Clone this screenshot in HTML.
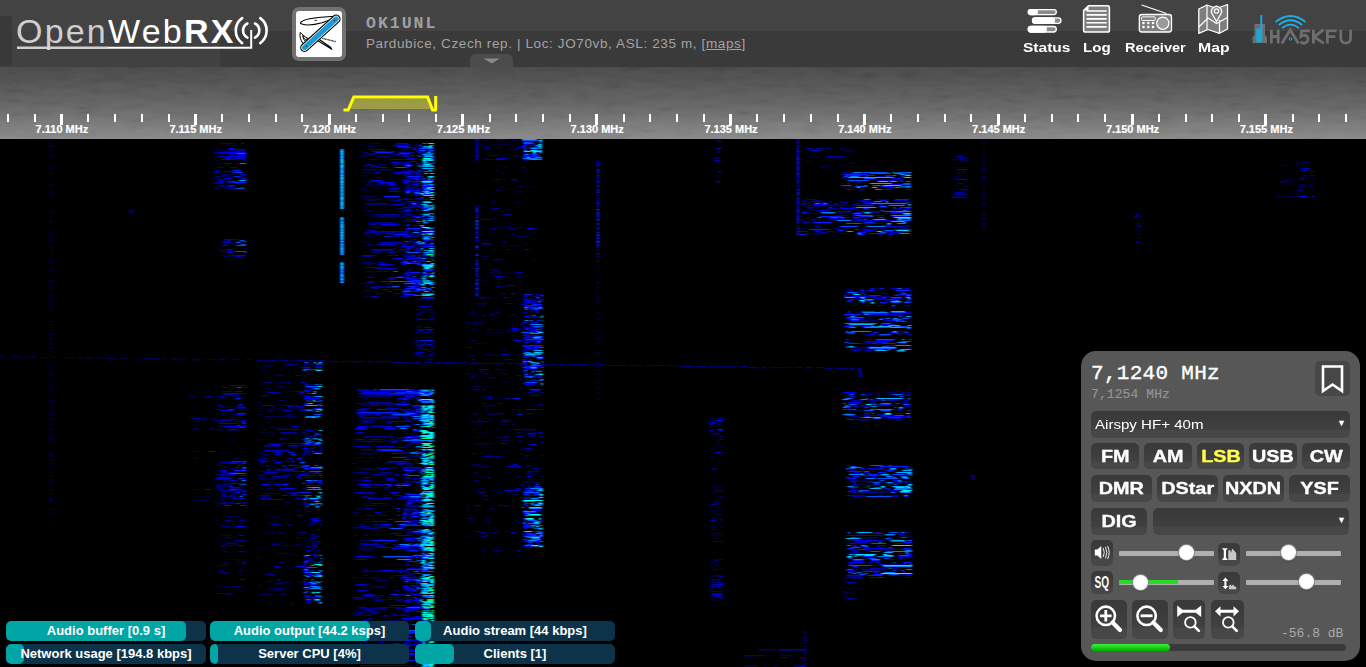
<!DOCTYPE html>
<html><head><meta charset="utf-8">
<style>
*{margin:0;padding:0;box-sizing:border-box}
html,body{width:1366px;height:667px;overflow:hidden;background:#000;font-family:"Liberation Sans",sans-serif}
.abs{position:absolute}
#hdr{position:absolute;left:0;top:0;width:1366px;height:67px;background:linear-gradient(#434343 0,#434343 31px,#3a3a3a 31px,#3a3a3a 67px)}
#spec{position:absolute;left:0;top:67px;width:1366px;height:72px;background:linear-gradient(#484848 0px,#4e4e4e 10px,#585858 23px,#626262 36px,#6c6c6c 46px,#787878 56px,#888 72px)}
#wf{position:absolute;left:0;top:139px;width:1366px;height:528px;background:#000}
.logo{position:absolute;left:16px;top:12px;font-size:34px;color:#fff;white-space:nowrap;letter-spacing:2.2px}
.logo .o{color:#cfcfcf}
.logo b{font-weight:bold}
.ttl{position:absolute;left:366px;top:13.5px;font-family:"Liberation Mono",monospace;font-weight:bold;font-size:16.5px;color:#a0a0a0;letter-spacing:2px}
.sub{position:absolute;left:366px;top:36px;font-size:13.5px;color:#a3a3a3;white-space:nowrap;letter-spacing:0.62px}
.sub u{text-decoration:underline}
.nav{position:absolute;top:40px;font-weight:bold;font-size:13.5px;color:#fff;white-space:nowrap;transform-origin:0 0}
.tick{position:absolute;top:114px;width:2px;height:8px;background:#fff}
.tick.maj{width:3px;height:11px}
.lbl{position:absolute;top:123px;font-weight:bold;font-size:11px;color:#fff;white-space:nowrap;transform:translateX(-50%);-webkit-text-stroke:0.2px #fff}
#panel{position:absolute;left:1081px;top:351px;width:279px;height:310px;background:#575757;border-radius:15px}
.btn{position:absolute;background:linear-gradient(#3a3a3a 0%,#3b3b3b 25%,#3e3e3e 50%,#414141 70%,#474747 72%,#474747 100%);border-radius:5px;color:#fff;font-weight:bold;font-size:17px;text-align:center;line-height:27px}
.btn span{display:inline-block;transform:scaleX(1.165);-webkit-text-stroke:0.35px currentColor}
.sbar{position:absolute;height:20px;border-radius:5px;background:#0c3349;overflow:hidden}
.sbar i{position:absolute;left:0;top:0;height:20px;background:#00a5a5;border-radius:5px}
.sbar span{position:absolute;left:0;right:0;top:0;text-align:center;line-height:20px;color:#fff;font-weight:bold;font-size:13px;white-space:nowrap}
.track{position:absolute;height:4.5px;background:#b0b0b0;border-radius:1px}
.thumb{position:absolute;width:15px;height:15px;border-radius:50%;background:#fff;box-shadow:0 0 0 1px #8a8a8a,0 1px 2px rgba(0,0,0,.4)}
</style></head><body>
<div id="hdr"></div>
<div class="abs" style="left:0;top:31px;width:220px;height:36px;background:#414141"></div>
<div class="abs" style="left:0;top:16px;width:12px;height:50px;background:#393939"></div>
<div id="spec"></div>
<svg class="abs" style="left:0;top:67px" width="1366" height="72"><defs><filter id="nz" x="0" y="0" width="100%" height="100%"><feTurbulence type="fractalNoise" baseFrequency="0.04 0.18" numOctaves="3" seed="4"/><feColorMatrix type="matrix" values="1.6 0 0 0 -0.3  1.6 0 0 0 -0.3  1.6 0 0 0 -0.3  0 0 0 0 0.045"/></filter></defs><rect width="1366" height="72" filter="url(#nz)"/></svg>
<div id="wf"></div>
<!--WF--><svg style="position:absolute;left:0;top:0" width="1366" height="667"><defs><filter id="bl" x="0" y="0" width="1366" height="667" filterUnits="userSpaceOnUse"><feGaussianBlur stdDeviation="1.0 0.45"/></filter></defs><g filter="url(#bl)" fill="none" stroke-width="1"><path stroke="#00002f" d="M220 145.5h1M217 149.5h10M217 150.5h10M222 150.5h9M232 151.5h4M213 154.5h2M214 159.5h4M214 160.5h4M214 188.5h9M223 245.5h4M219 250.5h4M221 252.5h2M231 257.5h1M216 398.5h13M216 399.5h13M220 399.5h2M221 407.5h15M221 414.5h4M223 415.5h1M233 415.5h10M230 418.5h6M216 422.5h10M216 430.5h8M218 433.5h1M218 461.5h7M220 464.5h2M222 468.5h2M226 474.5h3M223 481.5h5M223 485.5h9M219 485.5h7M217 488.5h6M230 489.5h10M216 490.5h11M222 492.5h2M229 491.5h1M221 495.5h4M221 496.5h4M220 499.5h2M216 503.5h4M222 453.5h3M222 454.5h3M234 459.5h5M222 507.5h7M234 507.5h6M217 519.5h1M215 520.5h4M225 521.5h7M238 524.5h2M238 525.5h2M226 525.5h1M243 529.5h1M219 540.5h7M224 541.5h13M224 542.5h13M244 541.5h2M238 552.5h8M226 552.5h4M220 559.5h9M231 559.5h15M221 561.5h1M219 571.5h3M217 587.5h3M243 586.5h3M217 591.5h1M217 592.5h1M240 592.5h2M226 595.5h6M244 594.5h1M212 419.5h3M197 420.5h5M197 421.5h5M210 429.5h3M195 458.5h4M192 480.5h2M192 481.5h2M201 480.5h2M201 481.5h2M211 480.5h4M190 496.5h4M199 496.5h9M191 500.5h4M369 144.5h2M395 145.5h1M363 153.5h4M369 155.5h6M376 157.5h17M406 157.5h1M366 162.5h3M377 165.5h2M362 170.5h30M370 173.5h21M362 176.5h4M389 176.5h3M370 180.5h2M378 182.5h2M366 182.5h8M376 185.5h10M370 186.5h31M373 188.5h2M373 189.5h2M403 191.5h3M363 198.5h4M379 198.5h15M379 199.5h15M367 200.5h5M389 200.5h4M409 205.5h1M381 212.5h1M399 212.5h11M366 216.5h10M378 217.5h29M369 223.5h15M364 233.5h40M366 235.5h3M367 236.5h8M390 237.5h10M361 241.5h8M361 242.5h8M367 245.5h5M362 246.5h1M401 247.5h4M366 248.5h2M364 251.5h3M380 252.5h2M371 253.5h10M364 269.5h1M365 276.5h8M397 277.5h11M365 290.5h5M376 294.5h6M385 293.5h1M388 297.5h2M404 145.5h5M405 147.5h2M403 151.5h2M406 151.5h1M407 163.5h4M405 165.5h2M404 167.5h3M414 175.5h7M405 184.5h4M410 185.5h3M404 188.5h17M404 189.5h17M408 198.5h4M408 199.5h4M403 206.5h2M404 210.5h1M407 210.5h5M403 210.5h6M405 211.5h6M405 212.5h6M413 215.5h2M404 216.5h3M404 217.5h3M407 224.5h1M405 229.5h3M405 230.5h3M402 234.5h12M403 257.5h2M404 263.5h4M404 264.5h4M406 281.5h1M405 298.5h3M417 298.5h2M417 299.5h2M426 298.5h1M426 299.5h1M414 299.5h4M427 300.5h4M417 310.5h4M424 310.5h10M419 316.5h2M415 319.5h5M414 320.5h6M429 320.5h5M429 321.5h5M417 326.5h4M428 326.5h1M415 333.5h4M414 341.5h4M415 343.5h2M423 343.5h1M421 345.5h4M418 347.5h4M431 348.5h3M416 351.5h9M415 355.5h5M421 355.5h8M421 356.5h8M428 356.5h6M428 357.5h6M416 359.5h3M422 359.5h3M426 360.5h8M364 399.5h4M365 402.5h9M388 402.5h1M362 402.5h5M362 403.5h5M366 404.5h33M371 408.5h2M363 414.5h5M358 415.5h16M359 417.5h5M382 417.5h16M365 419.5h4M358 425.5h4M358 426.5h4M398 426.5h5M357 427.5h27M364 437.5h30M366 439.5h3M355 440.5h21M394 441.5h4M359 447.5h3M360 450.5h20M355 453.5h2M359 454.5h18M357 461.5h3M357 462.5h3M389 468.5h9M364 469.5h8M380 473.5h12M372 475.5h14M375 475.5h16M361 478.5h6M361 479.5h6M358 484.5h21M363 493.5h7M371 493.5h6M366 496.5h6M383 498.5h9M362 503.5h8M357 509.5h5M374 511.5h16M353 513.5h6M409 514.5h1M355 515.5h11M355 519.5h7M353 525.5h4M353 526.5h4M360 526.5h4M374 525.5h9M402 526.5h3M378 527.5h12M352 528.5h14M357 533.5h28M361 540.5h3M359 544.5h10M380 545.5h4M364 546.5h2M357 546.5h13M374 547.5h12M362 548.5h12M365 548.5h1M365 549.5h1M360 550.5h16M361 555.5h12M387 555.5h15M358 568.5h1M372 571.5h4M374 575.5h13M361 578.5h1M369 578.5h11M372 585.5h17M372 586.5h17M372 598.5h9M362 609.5h24M354 610.5h7M365 611.5h9M384 611.5h3M355 615.5h6M368 619.5h4M382 626.5h3M362 630.5h5M382 629.5h7M382 630.5h7M358 632.5h21M361 635.5h1M361 636.5h1M355 637.5h12M402 638.5h5M355 639.5h9M360 640.5h17M360 641.5h17M363 648.5h47M383 658.5h5M402 658.5h4M408 658.5h2M404 393.5h2M406 394.5h6M403 395.5h12M406 408.5h7M402 410.5h4M405 410.5h3M403 414.5h3M409 415.5h12M404 416.5h2M404 419.5h5M405 421.5h7M408 435.5h1M408 436.5h1M411 436.5h4M404 442.5h2M403 453.5h4M407 453.5h2M409 457.5h12M407 465.5h3M403 470.5h16M406 472.5h15M404 482.5h17M404 483.5h6M405 487.5h16M404 502.5h6M405 504.5h13M403 509.5h8M403 519.5h9M402 528.5h1M410 528.5h4M406 530.5h10M406 532.5h1M408 532.5h2M403 538.5h16M402 543.5h2M403 574.5h3M411 577.5h4M407 592.5h4M405 594.5h7M405 598.5h1M407 598.5h2M411 619.5h1M404 634.5h10M417 634.5h2M404 643.5h4M402 661.5h2M411 666.5h2M415 666.5h6M393 395.5h6M495 140.5h12M484 141.5h3M500 140.5h8M500 141.5h8M491 144.5h20M491 145.5h20M478 146.5h1M518 147.5h5M486 147.5h3M509 148.5h3M487 153.5h4M505 155.5h2M508 155.5h1M514 156.5h5M502 157.5h3M483 159.5h3M499 166.5h2M499 167.5h2M496 172.5h1M516 172.5h1M501 172.5h4M501 173.5h4M503 180.5h2M501 187.5h2M518 187.5h3M495 189.5h15M511 190.5h2M481 191.5h5M515 192.5h3M531 192.5h2M492 202.5h4M492 203.5h4M513 202.5h1M517 203.5h3M481 206.5h4M505 208.5h5M505 209.5h5M503 215.5h9M521 214.5h2M521 215.5h2M481 219.5h1M494 219.5h2M481 226.5h2M496 226.5h2M501 227.5h2M508 229.5h4M489 232.5h2M531 232.5h2M480 234.5h1M525 237.5h3M483 239.5h6M483 240.5h6M525 244.5h2M490 245.5h1M500 245.5h6M512 245.5h9M512 246.5h9M500 249.5h1M483 260.5h3M493 260.5h10M489 270.5h8M494 271.5h5M497 272.5h7M498 274.5h3M486 276.5h2M524 275.5h6M498 283.5h1M534 283.5h1M502 294.5h3M476 304.5h11M496 306.5h1M515 307.5h6M474 310.5h3M479 310.5h4M495 310.5h1M495 311.5h1M468 314.5h8M481 314.5h3M481 315.5h3M490 315.5h5M512 315.5h2M483 316.5h3M476 318.5h3M497 318.5h1M471 329.5h5M471 330.5h5M493 329.5h7M507 331.5h4M483 332.5h10M497 332.5h11M475 343.5h12M483 354.5h2M486 355.5h6M519 355.5h2M470 356.5h6M483 364.5h5M494 363.5h5M480 371.5h1M497 370.5h9M480 372.5h4M483 374.5h7M504 374.5h3M473 375.5h1M473 376.5h1M470 377.5h4M521 376.5h1M492 378.5h4M471 380.5h2M495 379.5h3M475 383.5h2M485 386.5h4M485 387.5h4M508 386.5h3M471 390.5h8M483 390.5h3M487 399.5h6M484 406.5h12M485 410.5h3M504 409.5h1M511 410.5h3M493 414.5h11M502 420.5h9M470 421.5h2M467 421.5h1M479 425.5h2M502 424.5h6M497 430.5h3M506 429.5h5M506 430.5h5M466 433.5h1M481 432.5h5M491 432.5h2M491 433.5h2M517 433.5h2M472 433.5h1M477 433.5h5M478 436.5h2M475 437.5h6M520 441.5h2M477 444.5h14M487 447.5h3M487 448.5h3M488 450.5h3M472 454.5h4M480 460.5h2M485 467.5h5M482 477.5h3M517 477.5h4M503 478.5h2M477 485.5h2M478 488.5h6M478 489.5h6M493 490.5h6M478 493.5h7M508 493.5h3M510 495.5h2M484 500.5h5M518 506.5h2M475 509.5h6M481 537.5h6M515 536.5h4M535 300.5h1M523 302.5h5M524 316.5h6M525 330.5h2M531 330.5h1M525 330.5h4M524 335.5h6M541 335.5h2M524 352.5h5M524 361.5h6M524 374.5h3M535 374.5h1M530 393.5h5M525 395.5h4M531 406.5h4M522 430.5h14M523 432.5h5M533 433.5h4M539 437.5h4M532 452.5h1M524 456.5h3M524 457.5h3M533 456.5h3M526 466.5h6M536 472.5h4M530 474.5h3M529 476.5h2M530 479.5h2M523 482.5h10M528 487.5h4M524 487.5h2M523 492.5h2M524 494.5h3M263 365.5h10M263 366.5h10M292 365.5h3M260 367.5h3M260 368.5h3M263 370.5h4M282 370.5h1M265 374.5h3M281 375.5h2M301 376.5h2M265 385.5h3M265 386.5h3M278 388.5h1M278 389.5h1M259 391.5h7M276 391.5h1M287 391.5h6M266 393.5h2M261 396.5h7M303 402.5h2M303 403.5h2M257 408.5h2M261 409.5h1M271 408.5h10M282 408.5h3M282 409.5h3M296 409.5h7M259 411.5h1M265 417.5h5M260 427.5h2M272 427.5h3M279 428.5h2M275 428.5h14M275 429.5h14M293 429.5h3M259 432.5h16M259 453.5h4M260 457.5h5M270 457.5h22M259 459.5h9M292 461.5h2M259 464.5h2M260 474.5h7M259 476.5h5M260 477.5h2M263 478.5h1M281 477.5h20M266 482.5h7M278 483.5h1M285 482.5h6M285 483.5h6M267 489.5h5M262 492.5h2M271 509.5h10M299 510.5h2M267 516.5h3M271 516.5h8M271 517.5h8M299 517.5h2M262 518.5h1M274 518.5h12M266 522.5h7M266 523.5h7M271 531.5h4M271 532.5h4M266 533.5h2M279 533.5h5M299 533.5h6M271 542.5h13M270 544.5h1M297 545.5h3M285 546.5h3M291 545.5h4M291 546.5h4M258 548.5h10M282 548.5h5M282 549.5h5M290 554.5h3M303 556.5h1M281 557.5h5M260 566.5h2M260 567.5h2M271 576.5h2M304 582.5h1M265 583.5h1M265 584.5h1M276 584.5h6M299 583.5h6M276 586.5h2M268 589.5h18M288 588.5h4M287 594.5h3M303 364.5h7M309 365.5h2M303 367.5h2M303 434.5h1M303 435.5h1M304 444.5h3M305 447.5h2M305 453.5h7M305 454.5h7M307 472.5h2M305 482.5h7M306 510.5h1M309 510.5h4M304 560.5h2M307 559.5h2M316 513.5h2M307 522.5h1M314 522.5h2M305 531.5h4M309 535.5h6M315 537.5h4M306 539.5h5M306 540.5h5M309 540.5h6M309 541.5h6M318 540.5h1M315 543.5h1M312 549.5h3M315 549.5h6M315 550.5h6M313 551.5h1M826 149.5h5M840 149.5h5M844 151.5h10M808 156.5h15M826 158.5h17M851 161.5h3M851 162.5h3M821 167.5h5M827 166.5h5M837 166.5h14M906 174.5h2M847 179.5h5M873 179.5h8M856 183.5h3M829 199.5h2M842 199.5h4M876 200.5h13M893 201.5h4M902 201.5h4M804 201.5h6M804 202.5h6M897 202.5h4M811 202.5h3M833 205.5h1M839 204.5h6M814 206.5h26M840 206.5h2M844 206.5h7M864 207.5h9M827 209.5h11M802 210.5h13M846 210.5h2M890 211.5h6M808 212.5h6M853 217.5h2M812 218.5h8M819 220.5h16M819 221.5h16M849 222.5h2M849 223.5h2M811 223.5h1M805 225.5h24M815 227.5h6M800 228.5h28M843 229.5h6M901 229.5h7M800 230.5h1M822 230.5h7M835 232.5h7M835 233.5h7M812 234.5h9M879 292.5h6M869 293.5h3M845 295.5h3M903 306.5h8M858 313.5h3M870 315.5h1M870 334.5h4M846 334.5h3M844 341.5h7M854 341.5h9M865 392.5h18M885 393.5h12M907 393.5h3M857 395.5h3M843 401.5h2M869 401.5h10M852 404.5h10M857 406.5h3M854 411.5h8M853 418.5h3M901 470.5h7M851 471.5h5M847 475.5h4M859 477.5h3M859 478.5h3M883 483.5h3M851 484.5h16M850 485.5h8M874 489.5h3M874 490.5h3M877 534.5h6M900 536.5h12M846 537.5h2M857 538.5h20M857 539.5h5M882 551.5h10M849 556.5h2M849 568.5h27M895 568.5h1M854 568.5h11M893 569.5h8M899 570.5h4M873 570.5h20M843 578.5h5M843 579.5h5M851 578.5h2M851 579.5h2M840 587.5h5M852 588.5h4M847 588.5h4M847 589.5h4M845 591.5h4M852 591.5h3M845 597.5h2M955 158.5h3M960 159.5h7M955 160.5h3M953 167.5h8M965 168.5h2M957 171.5h1M957 172.5h1M954 175.5h8M954 176.5h8M965 179.5h2M964 185.5h3M964 186.5h3M954 188.5h6M957 191.5h8M957 192.5h8M952 197.5h9M966 196.5h1M718 424.5h2M712 426.5h1M712 432.5h2M722 431.5h1M712 435.5h3M712 435.5h3M718 436.5h3M710 443.5h2M712 447.5h3M712 448.5h3M710 473.5h1M710 474.5h1M713 473.5h2M715 477.5h2M715 478.5h2M713 487.5h3M717 486.5h3M717 487.5h3M712 493.5h2M711 497.5h1M720 497.5h2M720 498.5h1M714 502.5h2M711 505.5h5M718 504.5h2M716 508.5h4M720 507.5h3M717 514.5h2M716 514.5h7M716 515.5h7M716 518.5h1M715 520.5h1M721 521.5h2M715 525.5h3M722 527.5h1M710 527.5h4M710 528.5h4M712 534.5h10M712 535.5h10M712 553.5h1M714 555.5h2M714 561.5h4M716 565.5h2M711 567.5h2M720 566.5h1M720 567.5h1M712 575.5h2M710 590.5h1M710 595.5h3M718 596.5h5M719 597.5h4M711 597.5h3M712 599.5h3M712 600.5h3M716 140.5h2M720 145.5h1M714 148.5h2M720 158.5h1M715 161.5h4M715 171.5h2M715 176.5h3M720 180.5h1M720 181.5h1M747 650.5h1M758 650.5h17M779 654.5h8M779 655.5h8M744 656.5h11M788 656.5h5M744 657.5h23M799 658.5h7M745 666.5h4M795 666.5h3M749 666.5h6M804 638.5h2M804 640.5h2M804 641.5h2M804 643.5h2M804 653.5h2M804 655.5h2M804 661.5h2M804 663.5h2M804 665.5h2M1137 219.5h1M1137 226.5h4M1137 226.5h2M1136 228.5h1M1136 234.5h6M1282 166.5h2M1272 173.5h2M1272 177.5h6M1288 178.5h9M1280 182.5h6M1290 185.5h2M1276 197.5h4M1298 163.5h5M1302 163.5h4M1303 172.5h2M1298 173.5h1M1303 176.5h5M1308 180.5h1M1312 185.5h1M1298 187.5h2M1352 177.5h2M597 267.5h2M597 272.5h2M597 282.5h2M597 299.5h2M597 303.5h2M597 313.5h2M597 339.5h2M597 353.5h2M597 370.5h2M597 374.5h2M597 379.5h2M597 393.5h2M597 398.5h2M597 399.5h2M983 142.5h2M983 143.5h2M983 152.5h2M983 160.5h2M983 161.5h2M983 166.5h2M983 178.5h2M983 185.5h2M983 188.5h2M983 193.5h2M983 203.5h2M983 220.5h2M983 226.5h2M983 230.5h2M50 139.5h2M50 140.5h2M50 142.5h2M50 143.5h2M50 147.5h2M50 147.5h2M50 166.5h2M50 169.5h2M50 171.5h2M50 172.5h2M50 177.5h2M50 178.5h2M50 185.5h2M50 190.5h2M50 197.5h2M50 200.5h2M50 203.5h2M50 212.5h2M50 213.5h2M50 219.5h2M50 224.5h2M50 225.5h2M50 231.5h2M50 232.5h2M50 241.5h2M50 248.5h2M50 259.5h2M50 261.5h2M50 263.5h2M50 271.5h2M50 281.5h2M50 288.5h2M50 295.5h2M50 301.5h2M50 302.5h2M50 303.5h2M50 304.5h2M50 305.5h2M50 306.5h2M50 310.5h2M50 310.5h2M50 318.5h2M50 324.5h2M50 325.5h2M50 342.5h2M50 344.5h2M50 344.5h2M50 350.5h2M50 351.5h2M50 368.5h2M50 372.5h2M50 373.5h2M50 374.5h2M50 376.5h2M50 384.5h2M50 385.5h2M50 403.5h2M50 407.5h2M50 408.5h2M50 410.5h2M50 415.5h2M50 430.5h2M50 436.5h2M50 437.5h2M50 438.5h2M50 441.5h2M50 445.5h2M50 453.5h2M50 455.5h2M50 459.5h2M50 480.5h2M50 482.5h2M50 490.5h2M50 499.5h2M50 512.5h2M50 514.5h2M130 212.5h3M24 357.5h3M31 357.5h4M78 358.5h5M87 358.5h4M96 358.5h7M152 359.5h7M163 359.5h3M173 359.5h4M180 360.5h6M193 360.5h8M219 360.5h7M233 360.5h5M270 361.5h7M332 362.5h7M352 362.5h6M368 362.5h5M376 362.5h6M435 363.5h5M450 363.5h7M469 364.5h7M495 364.5h8M516 364.5h8M680 367.5h6M687 367.5h7M750 368.5h8M762 368.5h4M770 368.5h4M806 368.5h6"/><path stroke="#00005f" d="M215 148.5h1M218 150.5h2M213 153.5h2M221 153.5h4M218 157.5h7M233 159.5h13M243 160.5h3M216 163.5h9M216 171.5h4M216 177.5h3M221 176.5h5M214 178.5h1M217 178.5h3M218 181.5h7M218 181.5h4M214 183.5h3M219 186.5h5M218 186.5h6M223 187.5h3M224 242.5h5M230 241.5h2M236 242.5h6M223 244.5h4M223 256.5h6M244 394.5h2M232 399.5h3M219 406.5h6M234 406.5h11M223 414.5h1M230 417.5h6M219 421.5h4M231 421.5h2M219 427.5h3M216 429.5h8M228 430.5h12M220 463.5h2M216 473.5h2M222 476.5h3M217 478.5h16M223 480.5h5M230 481.5h8M222 483.5h8M217 485.5h3M217 487.5h6M216 489.5h11M222 491.5h2M242 492.5h4M222 492.5h4M222 495.5h4M230 495.5h2M226 495.5h3M240 496.5h3M233 498.5h4M220 498.5h2M216 502.5h4M224 503.5h3M230 503.5h4M221 504.5h6M231 440.5h3M234 458.5h5M234 516.5h6M219 525.5h2M232 525.5h1M221 535.5h6M227 535.5h4M220 537.5h1M234 537.5h1M221 545.5h5M224 562.5h3M221 563.5h8M239 570.5h5M239 573.5h1M222 579.5h3M217 586.5h3M223 586.5h5M226 594.5h6M197 396.5h1M192 408.5h2M200 418.5h7M193 451.5h6M195 457.5h4M193 489.5h7M198 500.5h6M205 500.5h4M340 165.5h4M340 179.5h4M340 185.5h4M340 186.5h4M340 198.5h4M340 220.5h4M340 221.5h4M340 225.5h4M340 263.5h4M340 265.5h4M360 144.5h1M395 144.5h1M399 144.5h2M374 146.5h4M371 153.5h11M362 155.5h11M360 156.5h6M376 156.5h17M366 165.5h5M364 166.5h2M364 172.5h5M397 174.5h3M362 175.5h4M389 175.5h3M370 179.5h2M378 181.5h2M365 184.5h7M376 184.5h10M362 190.5h1M364 190.5h2M369 191.5h2M362 196.5h14M367 199.5h5M372 199.5h10M389 199.5h4M397 199.5h2M369 200.5h8M365 204.5h25M397 208.5h13M365 210.5h6M368 211.5h8M381 211.5h1M378 216.5h29M372 225.5h5M365 233.5h2M401 233.5h3M366 234.5h3M380 243.5h22M401 246.5h4M399 250.5h11M380 251.5h2M390 251.5h14M371 252.5h10M409 253.5h1M361 262.5h13M371 263.5h7M379 263.5h6M367 264.5h5M373 264.5h2M360 268.5h1M364 268.5h1M377 269.5h20M372 272.5h1M360 283.5h8M371 288.5h8M365 289.5h5M363 291.5h17M371 297.5h6M388 296.5h2M415 145.5h2M404 149.5h3M406 149.5h5M403 150.5h2M402 152.5h2M403 156.5h2M407 159.5h9M403 161.5h2M416 164.5h5M405 164.5h2M404 166.5h3M406 170.5h8M411 175.5h3M410 177.5h3M405 183.5h4M410 184.5h3M406 188.5h10M404 199.5h3M403 199.5h2M402 202.5h6M404 209.5h1M411 210.5h4M416 211.5h2M413 214.5h2M409 216.5h1M412 221.5h6M402 233.5h12M407 242.5h6M409 244.5h1M406 250.5h2M407 270.5h5M403 290.5h3M409 297.5h2M427 216.5h4M423 231.5h3M422 233.5h9M420 300.5h2M427 300.5h3M417 309.5h4M424 309.5h10M418 312.5h6M432 316.5h2M415 318.5h5M417 330.5h7M416 338.5h1M420 337.5h9M421 342.5h1M430 343.5h4M415 344.5h4M416 345.5h7M432 347.5h2M417 348.5h5M426 354.5h8M419 355.5h2M430 355.5h2M419 356.5h3M357 390.5h4M360 394.5h6M364 398.5h4M365 401.5h9M361 404.5h19M363 405.5h5M378 409.5h1M386 409.5h13M399 410.5h11M363 413.5h5M362 418.5h38M403 417.5h1M359 420.5h15M372 425.5h12M361 437.5h11M396 438.5h3M409 438.5h1M384 440.5h8M376 447.5h19M359 453.5h18M355 457.5h9M362 461.5h8M355 467.5h8M364 468.5h8M356 480.5h5M362 481.5h10M358 483.5h21M376 485.5h8M362 486.5h9M385 488.5h4M355 493.5h20M357 493.5h5M362 495.5h2M366 495.5h6M384 495.5h6M383 503.5h5M406 506.5h4M357 508.5h5M404 512.5h2M353 512.5h6M354 513.5h2M365 519.5h5M357 524.5h7M378 526.5h12M352 527.5h14M360 540.5h11M407 544.5h3M364 545.5h2M362 547.5h12M359 548.5h3M360 549.5h16M373 557.5h3M372 570.5h4M361 572.5h2M389 575.5h9M353 577.5h5M369 577.5h11M375 580.5h13M362 585.5h9M364 587.5h14M357 591.5h11M363 595.5h11M352 598.5h12M376 599.5h9M361 605.5h3M359 608.5h8M384 610.5h3M381 612.5h1M383 616.5h5M364 621.5h4M386 620.5h14M359 623.5h19M364 624.5h20M363 627.5h2M362 629.5h5M401 630.5h3M375 638.5h1M404 640.5h6M366 644.5h1M359 644.5h17M402 644.5h1M353 646.5h3M363 647.5h47M369 650.5h20M357 656.5h14M363 661.5h7M376 662.5h21M411 390.5h2M403 394.5h12M402 397.5h8M404 403.5h1M402 406.5h3M402 409.5h4M404 413.5h2M404 415.5h2M407 418.5h2M404 418.5h5M406 419.5h9M414 432.5h1M411 434.5h2M404 435.5h3M411 435.5h4M405 437.5h2M407 441.5h1M412 442.5h8M410 443.5h11M404 449.5h7M407 452.5h3M409 456.5h12M407 464.5h3M402 468.5h2M403 469.5h16M406 471.5h15M404 478.5h3M404 482.5h6M411 483.5h1M406 492.5h3M402 499.5h4M406 499.5h7M407 501.5h5M404 501.5h6M413 502.5h2M403 505.5h4M406 506.5h4M403 508.5h8M414 508.5h1M410 510.5h2M403 510.5h10M403 512.5h4M405 520.5h5M406 521.5h4M420 528.5h1M408 531.5h2M412 532.5h2M417 533.5h1M405 534.5h5M403 537.5h16M403 548.5h13M407 551.5h11M403 554.5h1M405 558.5h8M416 571.5h5M405 573.5h3M410 573.5h2M409 574.5h6M407 578.5h13M402 583.5h1M404 583.5h2M403 589.5h11M406 594.5h6M407 598.5h2M406 601.5h5M406 602.5h7M414 604.5h4M420 604.5h1M409 607.5h11M406 616.5h5M403 617.5h6M404 619.5h3M404 620.5h1M405 621.5h9M406 627.5h2M404 633.5h10M404 640.5h1M417 643.5h2M414 662.5h4M402 665.5h2M358 389.5h2M363 390.5h6M360 391.5h14M359 396.5h34M491 139.5h2M484 140.5h3M509 147.5h3M517 148.5h2M477 156.5h2M502 156.5h3M483 158.5h3M476 234.5h2M476 239.5h2M476 262.5h2M476 270.5h2M476 291.5h2M476 292.5h2M476 143.5h2M503 167.5h4M522 168.5h3M534 168.5h1M512 180.5h5M529 180.5h2M493 181.5h1M498 181.5h3M524 181.5h2M496 190.5h5M515 191.5h3M519 191.5h4M531 191.5h2M517 202.5h3M479 221.5h2M485 221.5h2M501 226.5h2M506 226.5h4M513 228.5h5M510 232.5h1M480 233.5h1M532 233.5h3M489 236.5h2M525 236.5h3M497 239.5h1M482 244.5h9M525 243.5h2M490 244.5h1M482 256.5h7M483 259.5h3M489 269.5h8M494 270.5h5M508 273.5h1M486 275.5h2M504 276.5h2M496 279.5h6M483 280.5h3M534 282.5h1M486 285.5h2M504 286.5h4M480 298.5h5M487 297.5h4M504 298.5h3M476 303.5h11M509 307.5h2M472 312.5h4M512 314.5h2M509 315.5h6M511 322.5h2M474 324.5h7M474 328.5h2M507 330.5h4M497 347.5h3M503 350.5h4M486 354.5h6M470 355.5h6M470 363.5h2M483 363.5h5M488 371.5h2M483 373.5h7M498 373.5h9M474 374.5h3M492 375.5h1M478 376.5h3M482 377.5h2M492 377.5h4M471 379.5h2M475 382.5h2M483 382.5h2M472 386.5h7M471 389.5h8M482 396.5h5M478 397.5h4M498 398.5h3M484 405.5h12M485 409.5h3M511 409.5h3M517 409.5h5M480 419.5h2M502 419.5h9M470 420.5h2M474 424.5h2M472 429.5h4M497 429.5h3M466 432.5h1M515 433.5h4M489 436.5h2M501 440.5h9M475 443.5h1M477 443.5h14M504 450.5h2M472 464.5h8M481 467.5h2M485 466.5h5M482 476.5h3M517 476.5h4M479 477.5h1M467 488.5h1M516 489.5h4M521 488.5h1M476 490.5h2M508 492.5h3M512 494.5h6M467 506.5h1M504 506.5h4M469 508.5h2M488 509.5h3M484 518.5h4M516 518.5h1M481 533.5h5M492 533.5h4M532 317.5h6M522 323.5h2M523 327.5h11M524 334.5h6M524 351.5h5M523 369.5h1M523 375.5h5M531 376.5h12M525 380.5h1M525 387.5h2M527 392.5h9M532 404.5h3M529 416.5h2M532 451.5h1M527 472.5h7M532 479.5h3M531 482.5h7M522 485.5h1M522 489.5h4M524 493.5h3M525 513.5h2M523 514.5h2M268 364.5h3M281 374.5h2M274 382.5h3M287 383.5h3M265 388.5h4M276 393.5h6M297 393.5h5M301 395.5h4M278 400.5h8M258 402.5h3M274 406.5h3M296 407.5h7M296 408.5h7M269 411.5h3M259 414.5h3M286 414.5h8M272 416.5h9M283 416.5h15M267 422.5h3M260 426.5h2M272 426.5h3M267 427.5h9M293 428.5h3M262 429.5h7M302 432.5h3M304 439.5h1M266 443.5h22M266 444.5h1M264 446.5h17M264 451.5h25M259 452.5h4M262 454.5h7M275 455.5h6M291 462.5h4M266 466.5h3M259 466.5h3M272 466.5h3M267 468.5h2M285 469.5h3M290 468.5h8M259 471.5h16M264 473.5h14M258 478.5h21M281 478.5h6M270 481.5h3M278 482.5h1M267 488.5h5M260 496.5h10M302 499.5h3M302 502.5h2M267 515.5h3M288 525.5h3M270 532.5h4M279 532.5h5M266 537.5h3M268 553.5h2M290 553.5h3M278 562.5h6M274 567.5h6M277 580.5h4M296 581.5h3M300 581.5h3M279 582.5h12M276 585.5h2M268 588.5h18M275 590.5h7M261 594.5h11M303 363.5h7M303 366.5h2M305 385.5h1M310 389.5h3M305 414.5h3M306 431.5h7M306 431.5h6M303 433.5h2M315 433.5h2M306 445.5h2M304 450.5h12M304 453.5h3M311 466.5h2M303 472.5h4M312 477.5h1M305 481.5h7M303 482.5h2M304 502.5h2M309 509.5h4M304 559.5h2M308 566.5h3M303 571.5h6M307 589.5h2M309 596.5h3M305 597.5h5M304 598.5h2M309 598.5h2M313 599.5h3M307 603.5h4M307 521.5h1M309 534.5h6M310 536.5h4M313 539.5h3M307 541.5h7M313 542.5h6M317 545.5h1M311 545.5h2M315 550.5h4M840 148.5h5M844 150.5h10M826 157.5h17M844 157.5h4M805 161.5h6M848 163.5h6M821 166.5h5M906 173.5h2M858 177.5h3M847 179.5h6M901 179.5h4M844 188.5h2M859 190.5h5M804 201.5h2M813 200.5h10M819 202.5h13M862 203.5h15M801 204.5h6M860 204.5h15M887 204.5h13M816 207.5h2M864 206.5h9M807 208.5h6M885 210.5h2M838 212.5h14M811 213.5h11M800 219.5h21M854 221.5h43M805 222.5h5M856 221.5h6M876 221.5h6M804 223.5h3M822 223.5h8M886 227.5h19M843 228.5h6M861 228.5h6M878 228.5h8M819 232.5h2M812 233.5h9M823 233.5h6M797 171.5h2M797 186.5h2M797 189.5h2M891 289.5h5M874 299.5h10M849 305.5h9M908 312.5h1M868 317.5h2M868 318.5h1M846 319.5h4M849 320.5h30M907 321.5h1M892 324.5h2M865 335.5h11M899 335.5h2M865 343.5h5M903 344.5h3M846 345.5h8M850 347.5h18M852 348.5h39M845 349.5h1M849 349.5h4M885 392.5h12M876 394.5h3M907 395.5h3M846 395.5h5M865 395.5h3M858 399.5h2M857 401.5h6M854 410.5h8M846 418.5h3M853 417.5h3M857 420.5h13M896 420.5h5M909 419.5h1M849 470.5h4M888 470.5h8M851 470.5h5M865 477.5h2M900 478.5h6M848 480.5h11M862 480.5h4M895 482.5h16M868 483.5h2M851 483.5h16M881 483.5h8M854 489.5h10M910 493.5h2M853 534.5h2M858 534.5h3M883 535.5h6M900 535.5h12M910 537.5h2M871 539.5h1M879 548.5h6M847 549.5h2M851 550.5h9M882 550.5h10M897 553.5h12M870 563.5h2M849 567.5h27M879 567.5h8M895 567.5h1M902 567.5h8M893 568.5h8M862 570.5h15M856 574.5h6M898 576.5h2M852 578.5h11M844 577.5h12M852 587.5h4M844 593.5h3M850 593.5h5M952 159.5h3M965 167.5h2M955 170.5h2M963 172.5h2M956 173.5h6M963 178.5h1M956 185.5h2M963 188.5h1M952 189.5h1M955 193.5h4M961 193.5h2M952 196.5h9M960 197.5h6M710 418.5h3M715 424.5h6M711 429.5h5M712 433.5h1M712 434.5h3M718 435.5h3M712 436.5h1M717 439.5h2M716 445.5h1M713 445.5h1M718 446.5h4M720 449.5h2M713 451.5h1M712 463.5h2M722 486.5h1M716 490.5h2M716 497.5h1M720 497.5h1M711 501.5h2M715 503.5h2M718 502.5h3M716 507.5h4M720 513.5h1M713 518.5h2M711 521.5h5M721 520.5h2M718 522.5h2M712 533.5h10M716 547.5h1M712 552.5h1M716 564.5h2M718 566.5h1M711 569.5h4M721 575.5h2M710 576.5h4M711 580.5h4M717 580.5h3M720 589.5h1M712 589.5h3M711 594.5h4M712 598.5h3M718 598.5h5M712 599.5h3M714 147.5h2M714 149.5h3M718 152.5h1M714 161.5h6M715 170.5h2M718 172.5h3M715 175.5h3M717 177.5h4M778 650.5h28M796 650.5h5M782 655.5h5M788 655.5h5M749 665.5h2M761 665.5h4M795 665.5h3M804 636.5h2M804 639.5h2M804 641.5h2M804 647.5h2M804 648.5h2M804 650.5h2M1139 219.5h3M1136 223.5h4M1136 224.5h2M1136 227.5h1M1137 233.5h2M1296 164.5h3M1287 165.5h2M1272 172.5h2M1284 180.5h6M1278 184.5h2M1276 196.5h4M1285 196.5h10M1298 162.5h5M1301 165.5h2M1310 173.5h4M1303 175.5h5M1312 177.5h2M1299 184.5h7M1298 186.5h2M1303 186.5h3M1312 190.5h1M597 192.5h2M597 194.5h2M597 203.5h2M597 206.5h2M597 240.5h2M597 266.5h2M597 269.5h2M597 271.5h2M597 276.5h2M597 281.5h2M597 283.5h2M597 296.5h2M597 298.5h2M597 312.5h2M597 318.5h2M597 342.5h2M597 365.5h2M597 366.5h2M597 369.5h2M597 373.5h2M597 378.5h2M597 383.5h2M597 392.5h2M983 141.5h2M983 142.5h2M983 143.5h2M983 147.5h2M983 158.5h2M983 159.5h2M983 160.5h2M983 164.5h2M983 165.5h2M983 169.5h2M983 172.5h2M983 182.5h2M983 184.5h2M983 187.5h2M983 193.5h2M983 194.5h2M983 195.5h2M983 198.5h2M983 199.5h2M983 202.5h2M983 212.5h2M983 220.5h2M983 224.5h2M983 225.5h2M983 229.5h2M50 146.5h2M50 150.5h2M50 156.5h2M50 161.5h2M50 168.5h2M50 173.5h2M50 185.5h2M50 192.5h2M50 193.5h2M50 211.5h2M50 212.5h2M50 216.5h2M50 222.5h2M50 223.5h2M50 232.5h2M50 234.5h2M50 236.5h2M50 238.5h2M50 240.5h2M50 242.5h2M50 247.5h2M50 253.5h2M50 255.5h2M50 258.5h2M50 260.5h2M50 262.5h2M50 269.5h2M50 270.5h2M50 274.5h2M50 277.5h2M50 280.5h2M50 281.5h2M50 282.5h2M50 286.5h2M50 289.5h2M50 297.5h2M50 298.5h2M50 300.5h2M50 308.5h2M50 309.5h2M50 311.5h2M50 317.5h2M50 321.5h2M50 325.5h2M50 327.5h2M50 333.5h2M50 337.5h2M50 338.5h2M50 339.5h2M50 341.5h2M50 343.5h2M50 347.5h2M50 348.5h2M50 351.5h2M50 355.5h2M50 362.5h2M50 366.5h2M50 371.5h2M50 372.5h2M50 373.5h2M50 375.5h2M50 382.5h2M50 386.5h2M50 388.5h2M50 389.5h2M50 392.5h2M50 396.5h2M50 400.5h2M50 402.5h2M50 406.5h2M50 407.5h2M50 409.5h2M50 412.5h2M50 414.5h2M50 419.5h2M50 424.5h2M50 427.5h2M50 430.5h2M50 434.5h2M50 438.5h2M50 440.5h2M50 452.5h2M50 460.5h2M50 463.5h2M50 464.5h2M50 470.5h2M50 472.5h2M50 475.5h2M50 477.5h2M50 480.5h2M50 481.5h2M50 485.5h2M50 498.5h2M50 499.5h2M50 501.5h2M50 502.5h2M50 508.5h2M50 509.5h2M50 513.5h2M0 356.5h4M12 356.5h8M24 356.5h3M31 356.5h4M42 357.5h5M52 357.5h6M66 357.5h8M78 357.5h5M87 357.5h4M96 357.5h7M107 358.5h8M121 358.5h5M133 358.5h3M141 358.5h8M152 358.5h7M163 358.5h3M173 358.5h4M180 359.5h6M193 359.5h8M207 359.5h8M219 359.5h7M233 359.5h5M246 359.5h6"/><path stroke="#00008f" d="M219 143.5h5M231 143.5h3M230 150.5h16M232 150.5h4M219 153.5h27M229 154.5h6M222 174.5h7M241 175.5h5M228 176.5h2M217 179.5h15M215 183.5h9M225 186.5h6M214 187.5h4M230 189.5h4M224 240.5h2M219 249.5h4M226 250.5h7M222 251.5h6M224 256.5h1M231 256.5h1M222 387.5h7M222 391.5h10M223 394.5h16M217 396.5h4M235 397.5h2M217 404.5h3M217 405.5h6M237 408.5h9M221 413.5h4M233 414.5h10M222 419.5h16M215 420.5h19M242 423.5h4M225 425.5h1M221 426.5h3M224 427.5h22M232 427.5h3M222 467.5h2M222 471.5h5M221 472.5h15M226 473.5h3M216 479.5h14M223 484.5h9M216 486.5h10M230 488.5h10M238 490.5h4M221 490.5h25M221 496.5h15M231 503.5h4M216 505.5h5M227 516.5h5M225 520.5h7M245 529.5h1M225 537.5h6M234 540.5h12M227 543.5h9M225 544.5h3M238 551.5h8M239 563.5h7M219 565.5h9M219 570.5h3M220 572.5h8M233 586.5h8M240 591.5h2M217 593.5h15M190 396.5h4M208 397.5h3M189 417.5h5M212 418.5h3M204 420.5h2M193 428.5h5M210 428.5h3M340 157.5h4M340 177.5h4M340 178.5h4M340 199.5h4M340 219.5h4M340 222.5h4M340 237.5h4M340 239.5h4M340 240.5h4M340 278.5h4M340 280.5h4M340 281.5h4M340 283.5h4M369 143.5h2M373 143.5h6M396 144.5h12M363 144.5h1M368 146.5h5M390 152.5h5M363 152.5h4M369 154.5h6M394 154.5h16M406 156.5h1M368 159.5h11M377 164.5h2M381 164.5h5M394 164.5h4M371 166.5h9M362 169.5h30M393 173.5h2M379 183.5h16M389 185.5h7M362 188.5h3M407 188.5h3M388 190.5h1M403 190.5h3M409 204.5h1M399 211.5h11M372 214.5h29M369 222.5h15M385 222.5h11M368 224.5h10M408 225.5h2M367 230.5h9M382 230.5h1M364 232.5h40M387 234.5h4M390 236.5h10M367 244.5h5M401 244.5h3M371 250.5h22M408 252.5h2M390 253.5h4M362 256.5h11M374 255.5h2M385 267.5h1M409 269.5h1M375 271.5h13M397 276.5h11M388 278.5h8M367 282.5h7M371 286.5h19M376 293.5h6M399 296.5h10M404 144.5h5M405 146.5h2M411 148.5h5M417 151.5h4M406 157.5h4M413 157.5h1M415 159.5h5M402 170.5h3M404 172.5h17M405 174.5h7M414 174.5h7M418 175.5h3M403 177.5h6M402 178.5h1M404 179.5h6M412 182.5h7M407 184.5h2M413 185.5h6M413 186.5h1M406 193.5h3M404 194.5h2M414 195.5h5M417 199.5h4M410 199.5h7M407 202.5h9M402 204.5h1M417 204.5h4M407 206.5h14M407 209.5h5M416 210.5h3M411 217.5h4M407 223.5h1M414 229.5h7M405 231.5h1M409 231.5h2M412 234.5h3M404 235.5h5M414 236.5h2M410 240.5h2M414 240.5h2M420 239.5h1M405 242.5h1M412 244.5h1M402 247.5h13M408 255.5h5M406 276.5h2M405 287.5h2M405 297.5h3M422 195.5h10M422 209.5h3M422 256.5h5M421 259.5h1M427 299.5h4M430 312.5h1M429 318.5h5M429 319.5h5M417 325.5h4M428 325.5h1M417 327.5h4M418 330.5h6M415 332.5h4M424 332.5h6M430 337.5h2M414 340.5h4M415 342.5h2M423 342.5h1M421 344.5h4M418 346.5h4M420 349.5h4M433 353.5h1M415 354.5h5M426 359.5h8M371 394.5h22M388 401.5h1M396 401.5h3M401 402.5h3M370 402.5h23M405 402.5h2M366 403.5h33M383 405.5h8M361 408.5h9M357 410.5h9M391 410.5h2M381 413.5h2M398 414.5h12M358 414.5h16M359 416.5h5M382 416.5h16M383 421.5h2M362 422.5h13M396 423.5h3M403 423.5h2M398 425.5h5M357 427.5h11M385 427.5h8M395 427.5h9M355 429.5h11M364 436.5h30M407 436.5h3M401 438.5h5M390 439.5h5M394 440.5h4M391 442.5h7M370 457.5h3M387 462.5h22M352 463.5h3M385 463.5h4M397 464.5h9M375 467.5h5M389 467.5h9M360 469.5h22M406 470.5h1M354 472.5h15M380 472.5h12M372 474.5h14M395 475.5h4M386 479.5h8M402 478.5h2M408 478.5h2M386 480.5h11M359 485.5h13M394 485.5h5M360 487.5h19M390 493.5h9M362 496.5h4M362 497.5h13M383 497.5h9M396 498.5h6M408 499.5h2M364 505.5h13M409 513.5h1M366 515.5h22M360 525.5h4M402 525.5h3M360 526.5h10M374 527.5h20M365 528.5h14M361 539.5h3M379 539.5h6M406 539.5h3M359 543.5h10M383 543.5h8M380 544.5h4M394 545.5h2M374 546.5h12M384 549.5h1M408 569.5h2M363 570.5h6M363 571.5h17M364 575.5h3M361 577.5h1M363 577.5h2M401 578.5h9M379 587.5h6M395 590.5h4M401 595.5h3M361 595.5h2M364 596.5h11M381 596.5h2M372 597.5h9M405 597.5h5M354 599.5h11M387 599.5h17M406 599.5h4M375 600.5h8M404 601.5h6M376 607.5h25M362 608.5h24M395 608.5h15M365 610.5h9M356 612.5h10M355 614.5h6M370 614.5h3M393 615.5h4M362 615.5h9M398 615.5h12M368 618.5h4M406 620.5h4M382 625.5h3M402 625.5h3M393 629.5h5M353 630.5h2M358 631.5h21M392 632.5h11M355 633.5h39M379 638.5h19M402 637.5h5M356 640.5h2M378 640.5h16M359 642.5h1M394 644.5h6M364 645.5h4M365 646.5h7M380 646.5h5M387 646.5h6M358 649.5h9M383 657.5h5M402 657.5h4M408 657.5h2M364 658.5h4M406 393.5h6M417 395.5h4M415 398.5h6M412 400.5h1M406 400.5h2M409 410.5h12M403 413.5h3M409 414.5h12M403 417.5h1M408 416.5h4M405 420.5h7M406 424.5h2M407 430.5h1M403 433.5h7M407 438.5h11M407 444.5h3M404 446.5h4M403 452.5h4M407 452.5h2M403 453.5h3M411 465.5h2M405 468.5h16M404 469.5h3M405 473.5h5M409 478.5h12M404 481.5h17M407 484.5h1M407 503.5h5M413 505.5h8M416 506.5h4M404 510.5h4M407 512.5h2M414 511.5h7M402 514.5h8M420 516.5h1M411 521.5h3M418 521.5h3M407 525.5h3M406 529.5h10M404 530.5h1M406 531.5h1M406 532.5h4M404 540.5h8M412 541.5h2M404 541.5h3M416 544.5h5M404 545.5h6M406 549.5h13M406 550.5h3M410 559.5h7M404 560.5h8M404 561.5h3M406 564.5h3M404 565.5h14M406 572.5h4M402 577.5h5M411 576.5h4M410 580.5h5M407 583.5h13M405 586.5h2M405 590.5h10M405 590.5h7M405 593.5h7M405 597.5h1M407 597.5h2M415 600.5h6M405 603.5h2M403 610.5h13M415 617.5h5M402 619.5h19M420 621.5h1M417 633.5h2M418 637.5h3M404 642.5h4M404 644.5h5M415 654.5h6M404 656.5h7M405 659.5h1M411 665.5h2M415 665.5h6M403 390.5h12M414 391.5h12M362 393.5h29M363 394.5h12M393 394.5h6M423 426.5h6M422 552.5h3M421 659.5h7M487 139.5h3M495 139.5h12M513 140.5h3M482 146.5h6M518 146.5h5M497 147.5h4M486 148.5h5M514 148.5h3M489 155.5h11M514 155.5h5M521 155.5h2M485 159.5h8M530 142.5h4M524 160.5h3M476 207.5h2M476 217.5h2M476 230.5h2M476 283.5h2M476 286.5h2M476 288.5h2M476 147.5h2M476 149.5h2M476 155.5h2M476 159.5h2M476 160.5h2M496 171.5h1M516 171.5h1M494 179.5h6M503 179.5h2M501 186.5h2M518 186.5h3M492 200.5h2M491 208.5h9M503 214.5h9M503 217.5h2M481 218.5h1M494 218.5h2M482 219.5h9M486 227.5h2M520 227.5h3M508 228.5h4M527 229.5h8M534 239.5h1M493 259.5h10M514 272.5h3M498 273.5h3M498 282.5h1M502 293.5h3M496 298.5h1M488 298.5h2M505 303.5h8M483 305.5h2M496 305.5h1M490 314.5h5M483 315.5h3M481 322.5h3M487 329.5h4M513 329.5h2M498 330.5h1M472 340.5h3M467 347.5h5M474 349.5h2M519 354.5h2M473 359.5h3M504 359.5h9M495 369.5h4M480 370.5h1M480 371.5h4M467 373.5h4M470 376.5h4M505 382.5h2M483 389.5h3M488 396.5h4M492 397.5h1M468 398.5h1M487 398.5h6M482 403.5h5M518 406.5h1M474 413.5h2M493 413.5h11M478 420.5h3M489 420.5h2M472 421.5h3M476 421.5h5M479 424.5h2M517 432.5h2M505 437.5h3M498 437.5h5M520 440.5h2M492 443.5h2M520 450.5h2M472 453.5h4M481 453.5h1M521 454.5h1M491 456.5h11M488 478.5h2M503 477.5h2M521 477.5h1M474 480.5h4M481 491.5h5M478 492.5h7M483 495.5h5M480 496.5h1M484 499.5h5M513 499.5h3M518 505.5h2M490 508.5h4M468 518.5h4M474 522.5h1M487 522.5h3M516 522.5h3M497 531.5h3M511 533.5h4M515 535.5h1M468 536.5h2M481 536.5h6M493 550.5h8M524 296.5h3M541 297.5h2M524 298.5h2M535 299.5h1M523 301.5h5M524 307.5h5M539 307.5h3M530 310.5h3M535 312.5h4M524 315.5h6M525 317.5h5M524 317.5h19M530 327.5h2M525 329.5h2M531 329.5h1M539 330.5h2M541 334.5h2M526 336.5h13M542 336.5h1M523 338.5h8M528 338.5h2M525 349.5h13M523 351.5h3M524 357.5h6M522 360.5h4M524 360.5h6M523 364.5h5M525 364.5h3M523 372.5h4M524 373.5h3M535 373.5h1M530 375.5h1M539 377.5h1M525 385.5h5M541 389.5h2M523 393.5h2M537 393.5h4M526 413.5h8M522 429.5h14M533 432.5h4M538 432.5h5M527 434.5h8M539 436.5h4M540 442.5h3M525 455.5h4M526 465.5h6M532 468.5h8M536 471.5h4M534 474.5h1M529 475.5h2M523 481.5h10M523 486.5h2M528 486.5h4M523 491.5h2M532 493.5h2M523 499.5h5M523 505.5h4M523 520.5h3M533 525.5h2M524 532.5h7M522 533.5h2M525 537.5h1M537 541.5h5M523 542.5h1M527 542.5h2M536 543.5h3M538 545.5h2M285 364.5h13M301 367.5h4M276 374.5h2M278 375.5h4M301 375.5h2M264 382.5h7M281 382.5h4M279 386.5h4M267 391.5h2M294 391.5h11M300 393.5h4M261 395.5h7M290 395.5h2M282 405.5h16M263 406.5h1M261 408.5h1M259 410.5h1M265 416.5h5M279 427.5h2M281 438.5h5M262 439.5h3M300 444.5h5M270 445.5h11M289 446.5h9M259 458.5h9M258 460.5h8M273 460.5h4M292 460.5h2M275 463.5h7M288 464.5h1M293 464.5h3M282 466.5h4M267 470.5h4M275 470.5h19M286 474.5h4M299 475.5h6M259 475.5h5M282 475.5h5M260 476.5h2M272 476.5h17M263 477.5h1M286 492.5h11M262 493.5h17M291 494.5h7M261 499.5h4M296 499.5h4M295 499.5h10M285 502.5h4M267 509.5h1M299 509.5h2M299 516.5h2M271 524.5h6M303 531.5h1M266 532.5h2M299 532.5h6M272 544.5h7M297 544.5h3M285 545.5h3M277 553.5h11M296 555.5h2M303 555.5h1M257 557.5h3M287 566.5h2M266 574.5h9M266 581.5h6M304 581.5h1M276 583.5h6M259 585.5h3M280 594.5h5M290 603.5h3M309 364.5h2M304 368.5h7M305 388.5h1M305 391.5h6M304 399.5h16M307 405.5h2M305 429.5h4M305 436.5h10M318 445.5h3M320 448.5h2M306 467.5h2M308 467.5h2M307 471.5h2M308 472.5h3M314 472.5h1M313 481.5h5M313 482.5h1M303 492.5h2M304 500.5h1M310 500.5h4M307 504.5h2M314 505.5h7M306 509.5h1M304 558.5h1M311 561.5h5M305 566.5h2M316 566.5h1M304 568.5h2M320 584.5h2M303 588.5h3M306 511.5h6M317 518.5h2M314 521.5h2M310 522.5h6M308 524.5h5M316 529.5h5M313 531.5h1M315 536.5h4M311 543.5h3M307 544.5h1M313 546.5h3M306 546.5h5M315 546.5h2M313 547.5h6M312 548.5h3M313 550.5h1M320 554.5h1M805 148.5h7M815 148.5h8M826 148.5h5M826 156.5h19M843 172.5h5M850 174.5h8M842 178.5h3M847 178.5h5M857 182.5h4M842 183.5h2M856 186.5h2M859 185.5h3M889 188.5h5M806 199.5h10M876 199.5h13M857 200.5h15M893 200.5h4M902 200.5h4M802 201.5h2M862 202.5h7M897 201.5h4M833 204.5h1M807 205.5h5M814 205.5h26M840 205.5h2M806 206.5h2M840 208.5h4M827 208.5h11M890 210.5h6M802 211.5h2M834 211.5h2M857 212.5h23M836 215.5h12M853 216.5h2M806 217.5h3M826 217.5h2M813 221.5h2M804 223.5h3M815 226.5h6M834 228.5h6M901 228.5h7M800 229.5h1M838 229.5h2M862 229.5h11M863 231.5h12M889 232.5h3M877 234.5h6M797 140.5h2M797 143.5h2M797 146.5h2M797 147.5h2M797 155.5h2M797 156.5h2M797 176.5h2M797 182.5h2M797 198.5h2M797 201.5h2M797 203.5h2M797 209.5h2M797 210.5h2M797 214.5h2M797 215.5h2M797 223.5h2M797 228.5h2M876 288.5h2M846 290.5h6M859 293.5h5M881 293.5h7M845 294.5h3M844 296.5h2M849 297.5h20M870 297.5h7M885 300.5h5M875 305.5h10M903 305.5h8M858 312.5h3M896 313.5h15M849 322.5h3M901 323.5h6M870 325.5h6M889 333.5h10M870 333.5h4M866 342.5h14M848 342.5h6M875 343.5h12M859 343.5h12M876 345.5h4M886 346.5h7M845 346.5h3M866 346.5h10M908 348.5h3M872 349.5h2M843 393.5h13M907 392.5h3M865 394.5h7M892 400.5h6M843 400.5h2M869 400.5h10M900 402.5h8M852 403.5h10M863 403.5h19M857 405.5h3M864 414.5h6M886 414.5h6M850 416.5h9M901 469.5h7M894 471.5h6M873 477.5h4M893 481.5h6M877 482.5h3M883 482.5h3M881 489.5h3M862 491.5h27M850 492.5h12M863 492.5h23M877 495.5h22M851 533.5h2M857 537.5h20M848 542.5h2M853 546.5h7M877 547.5h2M853 550.5h4M851 551.5h9M849 552.5h12M885 553.5h6M849 555.5h2M899 559.5h3M878 562.5h2M885 565.5h2M889 564.5h16M899 569.5h4M850 570.5h6M847 576.5h16M841 588.5h1M844 592.5h4M845 598.5h11M960 158.5h7M961 160.5h3M954 178.5h4M965 178.5h2M956 186.5h1M965 186.5h2M965 190.5h2M954 194.5h13M963 196.5h3M718 418.5h5M712 420.5h2M716 421.5h7M711 423.5h4M718 423.5h2M712 431.5h2M715 434.5h3M720 439.5h3M718 443.5h2M710 449.5h3M718 452.5h1M712 456.5h1M711 468.5h5M713 469.5h4M713 486.5h3M721 490.5h2M714 491.5h8M712 492.5h2M711 496.5h1M720 496.5h2M714 501.5h2M711 504.5h5M717 513.5h2M714 517.5h2M716 517.5h1M715 519.5h1M719 519.5h4M714 526.5h2M722 526.5h1M715 538.5h1M713 541.5h10M716 559.5h2M720 559.5h3M714 560.5h4M712 562.5h2M711 566.5h2M716 569.5h2M721 569.5h2M717 582.5h6M710 586.5h13M709 588.5h2M710 589.5h1M722 589.5h1M710 591.5h13M718 595.5h5M711 596.5h1M719 596.5h4M716 597.5h7M718 140.5h2M716 157.5h3M717 182.5h3M747 649.5h1M758 649.5h17M744 655.5h11M756 655.5h8M799 657.5h7M745 665.5h4M753 665.5h5M765 666.5h1M774 666.5h2M794 666.5h4M804 632.5h2M804 637.5h2M804 638.5h2M804 640.5h2M804 642.5h2M804 643.5h2M804 646.5h2M804 652.5h2M804 654.5h2M804 657.5h2M804 659.5h2M804 660.5h2M804 662.5h2M804 663.5h2M804 664.5h2M804 665.5h2M804 666.5h2M1136 215.5h2M1135 217.5h2M1137 218.5h1M1137 225.5h4M1139 226.5h3M1135 230.5h2M1287 164.5h1M1282 165.5h2M1280 181.5h6M1290 184.5h2M1305 162.5h4M1303 171.5h2M1310 175.5h4M1300 177.5h5M1301 178.5h2M1312 178.5h2M1308 179.5h1M1312 184.5h1M1310 186.5h3M1297 190.5h6M597 173.5h2M597 187.5h2M597 195.5h2M597 201.5h2M597 211.5h2M597 282.5h2M597 287.5h2M597 301.5h2M597 302.5h2M597 330.5h2M597 338.5h2M597 352.5h2M597 355.5h2M597 362.5h2M597 381.5h2M597 387.5h2M983 151.5h2M983 161.5h2M983 168.5h2M983 170.5h2M983 173.5h2M983 176.5h2M983 177.5h2M983 178.5h2M983 192.5h2M983 204.5h2M983 213.5h2M983 215.5h2M983 218.5h2M983 219.5h2M983 223.5h2M983 226.5h2M50 145.5h2M50 154.5h2M50 184.5h2M50 221.5h2M50 294.5h2M50 334.5h2M50 418.5h2M50 429.5h2M50 454.5h2M50 479.5h2M50 489.5h2M50 493.5h2M50 500.5h2M130 210.5h3M130 211.5h3M130 212.5h3M257 360.5h5M264 360.5h5M270 360.5h7M281 360.5h8M291 360.5h3M297 360.5h8M308 360.5h7M319 360.5h6M327 361.5h3M332 361.5h7M342 361.5h4M348 361.5h3M352 361.5h6M359 361.5h6M368 361.5h5M376 361.5h6M383 361.5h8M392 362.5h7M400 362.5h7M409 362.5h4M415 362.5h5M424 362.5h7M435 362.5h5M442 362.5h7M450 362.5h7M461 362.5h6M469 363.5h7M477 363.5h7M486 363.5h8M495 363.5h8M506 363.5h8M516 363.5h8M528 363.5h4M533 363.5h7M542 364.5h5M550 364.5h5M559 364.5h6M569 364.5h8M578 364.5h4M583 364.5h5M592 364.5h4M599 364.5h5M607 365.5h5M613 365.5h5M619 365.5h7M629 365.5h7M638 365.5h5M647 365.5h4M653 365.5h7M661 365.5h3M667 365.5h5M674 365.5h3M680 366.5h6M687 366.5h7M696 366.5h4M701 366.5h5M709 366.5h5M716 366.5h6M724 366.5h6M732 366.5h5M741 366.5h7M750 367.5h8M762 367.5h4M770 367.5h4M775 367.5h3M779 367.5h4M785 367.5h3M790 367.5h3M796 367.5h6M806 367.5h6M816 367.5h7M825 368.5h8M836 368.5h8M845 368.5h3M850 368.5h5M858 369.5h2M859 373.5h2M860 375.5h2"/><path stroke="#0000bf" d="M225 143.5h5M232 145.5h5M245 145.5h1M214 152.5h4M218 156.5h7M233 158.5h13M243 159.5h3M218 167.5h6M230 167.5h7M216 170.5h4M224 171.5h15M214 172.5h4M216 176.5h3M218 180.5h7M227 182.5h10M214 182.5h3M219 185.5h5M229 186.5h5M225 188.5h2M224 239.5h15M224 241.5h5M236 241.5h6M222 242.5h10M229 255.5h2M234 256.5h9M233 387.5h2M244 393.5h2M221 396.5h2M223 397.5h3M236 399.5h5M238 405.5h6M237 414.5h9M241 420.5h5M235 421.5h11M219 423.5h20M219 425.5h2M237 426.5h4M228 429.5h12M243 429.5h2M221 462.5h25M219 465.5h3M236 465.5h7M231 468.5h3M242 469.5h1M220 470.5h8M222 473.5h1M217 474.5h9M227 474.5h10M217 477.5h16M230 480.5h8M217 484.5h3M241 487.5h2M221 488.5h1M242 491.5h4M234 492.5h1M222 494.5h4M230 494.5h2M234 494.5h2M240 495.5h3M233 497.5h4M239 499.5h3M222 500.5h2M224 502.5h3M230 502.5h4M221 503.5h6M240 520.5h5M222 526.5h3M226 526.5h4M244 537.5h1M235 544.5h2M229 545.5h4M222 546.5h2M225 551.5h2M237 561.5h2M242 561.5h2M243 562.5h3M239 572.5h1M205 396.5h2M205 417.5h1M193 418.5h6M209 496.5h1M340 149.5h4M340 152.5h4M340 153.5h4M340 154.5h4M340 159.5h4M340 163.5h4M340 163.5h4M340 164.5h4M340 165.5h4M340 167.5h4M340 167.5h4M340 169.5h4M340 170.5h4M340 178.5h4M340 181.5h4M340 182.5h4M340 184.5h4M340 185.5h4M340 186.5h4M340 187.5h4M340 190.5h4M340 190.5h4M340 192.5h4M340 195.5h4M340 196.5h4M340 197.5h4M340 199.5h4M340 201.5h4M340 202.5h4M340 204.5h4M340 206.5h4M340 208.5h4M340 219.5h4M340 220.5h4M340 223.5h4M340 224.5h4M340 227.5h4M340 234.5h4M340 240.5h4M340 241.5h4M340 245.5h4M340 249.5h4M340 251.5h4M340 252.5h4M340 262.5h4M340 263.5h4M340 264.5h4M340 269.5h4M340 273.5h4M340 276.5h4M404 144.5h2M409 144.5h1M393 145.5h8M397 147.5h11M369 149.5h17M375 153.5h17M398 152.5h10M366 153.5h4M390 159.5h17M406 162.5h4M366 164.5h5M408 164.5h2M364 165.5h2M367 165.5h9M396 165.5h3M409 166.5h1M370 167.5h3M397 173.5h3M382 175.5h1M368 181.5h8M405 183.5h2M388 188.5h11M389 191.5h12M384 197.5h16M399 199.5h11M394 200.5h7M367 203.5h7M375 203.5h12M392 204.5h12M391 225.5h1M371 227.5h10M369 231.5h39M375 234.5h4M405 236.5h5M408 241.5h2M380 242.5h22M377 244.5h19M407 246.5h1M394 249.5h1M399 249.5h11M409 252.5h1M388 255.5h6M378 262.5h6M401 263.5h9M365 267.5h16M377 268.5h20M367 271.5h3M372 271.5h1M367 277.5h7M387 279.5h8M408 279.5h2M387 283.5h6M405 283.5h5M366 286.5h2M379 287.5h5M383 289.5h6M393 289.5h17M395 293.5h15M366 296.5h2M371 296.5h6M415 144.5h2M407 145.5h6M404 148.5h3M415 151.5h2M408 152.5h6M403 155.5h2M404 156.5h6M407 158.5h9M403 162.5h3M416 163.5h5M403 165.5h12M418 171.5h3M404 175.5h3M408 178.5h13M403 182.5h5M417 183.5h4M407 185.5h6M420 185.5h1M406 186.5h2M416 186.5h1M406 187.5h10M404 198.5h3M418 199.5h3M417 202.5h4M405 214.5h6M404 220.5h2M412 220.5h6M404 221.5h2M406 229.5h15M402 231.5h2M403 232.5h6M404 234.5h5M418 234.5h2M417 236.5h1M403 236.5h10M407 241.5h6M405 243.5h4M404 244.5h1M415 244.5h3M408 254.5h1M403 255.5h1M404 256.5h8M403 259.5h6M402 260.5h3M414 260.5h2M417 262.5h4M402 264.5h2M403 273.5h6M404 274.5h9M420 275.5h1M410 282.5h10M405 282.5h1M405 284.5h2M413 284.5h8M417 286.5h3M403 289.5h3M414 291.5h7M403 292.5h4M404 295.5h13M406 295.5h4M423 145.5h3M422 148.5h12M427 152.5h4M422 169.5h3M424 170.5h1M422 181.5h12M423 185.5h4M422 188.5h6M423 193.5h5M422 199.5h3M427 215.5h4M432 216.5h2M422 218.5h6M428 219.5h1M423 230.5h3M429 231.5h5M422 232.5h9M423 240.5h11M424 254.5h10M422 261.5h3M424 264.5h2M422 274.5h12M422 275.5h1M421 277.5h2M423 289.5h2M422 298.5h12M420 299.5h2M417 305.5h1M419 306.5h12M433 312.5h1M418 319.5h10M424 327.5h7M417 329.5h7M433 332.5h1M416 337.5h1M423 343.5h3M426 344.5h7M429 345.5h2M432 346.5h2M431 349.5h3M428 351.5h3M415 352.5h9M357 389.5h4M360 393.5h6M356 403.5h6M388 404.5h3M371 405.5h8M378 408.5h1M386 408.5h13M399 409.5h11M357 413.5h42M387 414.5h2M362 417.5h38M389 421.5h21M386 422.5h6M371 426.5h13M358 429.5h11M356 432.5h8M390 437.5h3M396 437.5h3M409 437.5h1M354 439.5h10M370 439.5h13M361 441.5h22M354 446.5h17M376 446.5h19M397 447.5h8M362 449.5h11M377 450.5h22M382 451.5h21M379 457.5h2M378 468.5h12M364 477.5h8M362 480.5h10M397 483.5h13M376 484.5h8M362 485.5h9M385 487.5h4M397 487.5h5M355 492.5h20M394 495.5h8M400 496.5h10M403 497.5h7M367 498.5h25M372 503.5h10M407 504.5h3M406 505.5h4M365 508.5h7M404 511.5h2M375 512.5h7M409 512.5h1M364 521.5h3M371 521.5h17M375 525.5h2M409 525.5h1M355 535.5h2M409 540.5h1M385 541.5h11M374 543.5h5M407 543.5h3M362 544.5h17M369 545.5h2M396 547.5h2M378 547.5h18M400 547.5h10M392 548.5h18M373 556.5h3M397 570.5h7M398 575.5h12M355 584.5h14M357 590.5h11M363 594.5h11M375 595.5h4M352 597.5h12M388 597.5h4M394 597.5h7M397 600.5h4M359 607.5h8M406 608.5h4M406 611.5h3M371 612.5h8M383 615.5h5M362 620.5h1M364 620.5h4M368 627.5h2M392 627.5h4M401 629.5h3M404 629.5h6M380 635.5h5M375 637.5h1M404 639.5h6M379 642.5h5M360 643.5h3M366 643.5h1M369 649.5h20M362 653.5h15M408 656.5h2M376 661.5h21M401 665.5h6M418 395.5h3M405 398.5h6M404 402.5h1M402 405.5h3M412 406.5h9M416 408.5h5M404 411.5h5M404 412.5h2M409 412.5h12M403 414.5h2M407 417.5h2M410 424.5h1M406 429.5h2M413 431.5h8M403 431.5h2M414 431.5h1M411 433.5h2M420 435.5h1M405 436.5h2M412 441.5h8M410 442.5h11M407 451.5h3M416 452.5h4M407 456.5h1M410 455.5h3M403 456.5h2M407 463.5h5M407 465.5h3M402 467.5h2M403 475.5h3M411 482.5h1M410 484.5h1M404 493.5h7M420 494.5h1M402 498.5h4M408 498.5h13M407 500.5h5M410 509.5h2M414 510.5h5M403 514.5h4M411 514.5h7M404 516.5h3M411 517.5h8M403 518.5h2M411 520.5h10M404 522.5h11M412 525.5h6M420 524.5h1M418 530.5h3M417 532.5h1M420 534.5h1M403 535.5h9M415 540.5h1M412 541.5h2M410 551.5h8M405 557.5h8M405 559.5h3M407 568.5h11M419 569.5h2M416 570.5h5M403 571.5h4M420 577.5h1M407 577.5h13M405 580.5h16M406 580.5h2M405 582.5h2M413 586.5h6M405 587.5h7M416 588.5h5M403 588.5h11M420 590.5h1M418 593.5h3M414 598.5h5M406 600.5h5M414 603.5h4M420 603.5h1M409 606.5h11M406 612.5h1M411 617.5h9M405 624.5h5M406 626.5h2M404 632.5h8M404 633.5h12M405 636.5h2M407 637.5h5M416 638.5h2M402 639.5h2M410 640.5h2M415 640.5h6M410 640.5h5M417 642.5h2M403 643.5h4M408 643.5h3M416 644.5h1M412 646.5h1M404 654.5h10M417 653.5h4M402 655.5h5M410 655.5h2M415 656.5h6M414 661.5h4M363 389.5h6M360 390.5h14M376 390.5h19M396 390.5h17M395 393.5h21M367 393.5h6M390 394.5h15M376 394.5h14M408 394.5h21M410 396.5h5M422 424.5h3M428 428.5h2M431 460.5h3M422 467.5h2M422 536.5h8M423 562.5h3M421 606.5h4M421 612.5h13M422 618.5h2M427 632.5h7M422 649.5h1M423 656.5h3M496 158.5h4M501 158.5h7M530 146.5h2M523 149.5h3M532 156.5h9M522 158.5h2M476 214.5h2M476 223.5h2M476 224.5h2M476 230.5h2M476 233.5h2M476 234.5h2M476 236.5h2M476 238.5h2M476 248.5h2M476 249.5h2M476 259.5h2M476 261.5h2M476 262.5h2M476 266.5h2M476 269.5h2M476 272.5h2M476 274.5h2M476 275.5h2M476 280.5h2M476 286.5h2M476 290.5h2M476 291.5h2M476 295.5h2M476 296.5h2M476 142.5h2M476 143.5h2M476 149.5h2M522 167.5h3M534 167.5h1M496 170.5h1M512 179.5h5M534 186.5h1M492 228.5h4M512 234.5h2M519 236.5h3M496 242.5h1M503 242.5h3M482 243.5h9M494 249.5h2M503 249.5h1M533 259.5h2M491 272.5h2M508 272.5h1M494 276.5h9M517 276.5h2M507 285.5h8M510 293.5h6M480 297.5h5M504 297.5h3M510 297.5h2M521 298.5h1M468 322.5h2M475 322.5h2M512 330.5h7M501 354.5h8M475 362.5h2M502 363.5h1M479 369.5h10M517 375.5h4M488 377.5h3M510 377.5h2M519 379.5h3M499 403.5h3M474 414.5h2M503 420.5h2M483 421.5h5M503 421.5h8M512 424.5h2M513 429.5h8M498 436.5h1M517 436.5h5M501 443.5h6M484 456.5h6M481 466.5h2M507 466.5h15M475 472.5h2M467 477.5h1M516 488.5h4M505 490.5h14M484 496.5h1M467 505.5h1M474 505.5h7M504 505.5h4M476 531.5h4M481 532.5h5M492 532.5h4M485 535.5h3M483 550.5h2M518 551.5h2M541 294.5h2M538 299.5h1M540 301.5h3M525 306.5h10M539 305.5h4M537 307.5h1M529 308.5h8M525 308.5h1M529 308.5h3M532 316.5h6M522 322.5h2M540 329.5h2M526 334.5h1M528 336.5h5M534 338.5h9M525 340.5h17M524 341.5h1M534 342.5h7M533 351.5h4M540 351.5h2M523 355.5h9M537 356.5h6M529 359.5h3M537 359.5h1M530 360.5h1M522 365.5h5M525 367.5h12M538 366.5h4M523 368.5h1M529 373.5h3M531 375.5h12M525 379.5h1M522 380.5h1M527 383.5h10M530 390.5h10M531 395.5h10M539 404.5h4M538 433.5h5M522 435.5h3M542 435.5h1M530 436.5h3M529 444.5h4M525 448.5h7M541 455.5h2M527 471.5h7M527 473.5h3M542 477.5h1M541 479.5h2M522 484.5h1M534 487.5h7M529 489.5h6M525 491.5h9M528 492.5h5M538 494.5h3M542 494.5h1M525 495.5h3M540 496.5h2M530 500.5h8M524 511.5h3M525 512.5h2M523 513.5h2M524 521.5h2M529 522.5h2M523 527.5h8M537 528.5h2M522 534.5h3M526 535.5h10M539 535.5h4M523 535.5h4M523 540.5h14M525 540.5h3M528 542.5h2M538 541.5h2M524 544.5h1M529 547.5h4M296 375.5h4M304 375.5h1M287 382.5h3M268 392.5h12M263 405.5h11M303 405.5h2M296 406.5h7M292 408.5h2M269 410.5h3M282 410.5h10M276 429.5h24M281 432.5h11M304 438.5h1M279 439.5h4M264 445.5h17M264 450.5h25M274 452.5h8M275 454.5h6M291 455.5h5M302 454.5h3M300 457.5h3M298 459.5h4M286 460.5h1M260 461.5h9M280 461.5h3M291 461.5h4M260 462.5h4M304 464.5h1M266 465.5h3M294 465.5h11M285 468.5h3M291 471.5h11M264 472.5h14M296 476.5h4M283 485.5h5M260 495.5h10M290 495.5h15M302 498.5h3M266 499.5h12M288 524.5h3M303 562.5h2M274 566.5h6M271 579.5h2M277 579.5h4M283 593.5h2M270 603.5h2M305 364.5h2M314 367.5h8M305 384.5h1M306 385.5h2M310 388.5h3M307 397.5h6M319 401.5h1M303 429.5h1M306 430.5h7M321 431.5h1M303 432.5h2M315 432.5h2M306 433.5h3M315 434.5h4M305 435.5h2M312 447.5h4M307 451.5h3M304 452.5h3M309 452.5h2M321 453.5h1M304 469.5h16M307 474.5h1M316 482.5h6M320 484.5h2M317 497.5h5M314 500.5h4M304 501.5h2M304 504.5h3M314 556.5h3M308 558.5h3M305 560.5h7M321 560.5h1M314 563.5h2M307 565.5h5M306 568.5h3M303 570.5h6M305 582.5h2M303 584.5h5M305 586.5h1M307 588.5h2M309 595.5h3M305 596.5h5M314 597.5h4M313 598.5h3M307 602.5h4M318 517.5h3M311 518.5h6M319 524.5h2M311 538.5h4M318 543.5h2M313 544.5h2M317 544.5h1M306 550.5h5M311 554.5h5M810 150.5h11M886 176.5h6M858 176.5h3M865 177.5h3M876 176.5h8M876 180.5h19M898 180.5h5M847 181.5h8M849 186.5h2M844 187.5h2M859 189.5h5M905 189.5h6M895 200.5h14M804 200.5h2M839 201.5h2M862 202.5h15M801 203.5h6M808 203.5h3M835 204.5h2M852 204.5h5M842 205.5h3M909 205.5h2M816 206.5h2M807 207.5h6M863 209.5h6M816 210.5h13M838 211.5h14M802 213.5h5M855 212.5h6M891 213.5h13M884 213.5h7M852 216.5h1M853 218.5h7M839 219.5h15M859 220.5h3M854 220.5h43M805 221.5h5M910 222.5h1M862 223.5h20M865 225.5h5M886 226.5h19M814 230.5h7M816 232.5h2M819 231.5h2M826 231.5h7M884 231.5h1M821 232.5h5M888 232.5h14M843 233.5h4M831 234.5h1M797 140.5h2M797 141.5h2M797 168.5h2M797 170.5h2M797 175.5h2M797 185.5h2M797 186.5h2M797 188.5h2M797 195.5h2M797 204.5h2M797 205.5h2M797 217.5h2M797 220.5h2M797 229.5h2M871 289.5h3M891 288.5h5M845 297.5h2M880 296.5h4M886 296.5h4M905 296.5h6M868 297.5h4M849 298.5h1M854 298.5h5M874 298.5h10M898 298.5h2M890 300.5h5M907 300.5h4M848 301.5h4M850 302.5h2M880 303.5h7M866 305.5h4M861 312.5h14M908 311.5h1M847 312.5h4M844 315.5h17M899 314.5h4M906 314.5h2M868 316.5h2M868 317.5h1M846 318.5h4M852 319.5h3M902 321.5h2M853 321.5h16M909 322.5h2M892 323.5h2M893 325.5h2M904 332.5h3M895 333.5h9M865 334.5h11M899 334.5h2M906 334.5h5M865 342.5h5M903 343.5h3M852 350.5h9M865 350.5h6M907 394.5h3M849 396.5h7M852 400.5h4M857 400.5h6M889 400.5h5M876 405.5h14M864 406.5h5M905 406.5h5M898 410.5h3M845 413.5h5M877 415.5h2M864 415.5h23M846 417.5h3M888 418.5h14M857 419.5h13M896 419.5h5M875 466.5h2M903 467.5h6M867 468.5h17M849 469.5h4M869 469.5h16M888 469.5h8M886 471.5h7M872 471.5h3M901 471.5h3M897 475.5h1M908 475.5h2M853 477.5h7M865 476.5h3M846 478.5h4M910 477.5h1M863 481.5h11M895 481.5h16M868 482.5h2M898 483.5h3M910 482.5h1M874 484.5h5M890 483.5h8M853 484.5h4M866 485.5h10M863 487.5h8M852 488.5h3M884 489.5h2M887 489.5h3M891 490.5h8M910 492.5h2M846 495.5h18M852 496.5h11M875 532.5h5M880 537.5h1M885 539.5h11M855 542.5h14M848 543.5h10M867 545.5h2M878 545.5h8M879 547.5h6M847 549.5h7M886 548.5h8M903 549.5h8M882 549.5h30M864 559.5h4M903 559.5h2M870 562.5h2M903 563.5h9M849 564.5h3M846 565.5h1M874 565.5h3M884 566.5h3M870 568.5h15M862 569.5h15M846 570.5h2M853 572.5h2M903 572.5h2M856 573.5h6M866 575.5h2M898 575.5h2M852 577.5h11M909 577.5h1M846 582.5h10M842 591.5h2M963 171.5h2M958 183.5h5M960 189.5h7M955 192.5h4M961 192.5h2M953 197.5h6M709 422.5h7M710 424.5h2M718 430.5h5M709 430.5h4M721 430.5h1M716 433.5h3M722 433.5h1M721 436.5h1M716 444.5h1M715 452.5h7M711 459.5h1M722 469.5h1M716 489.5h2M715 502.5h2M709 506.5h1M712 510.5h2M719 510.5h1M711 520.5h5M712 529.5h3M716 575.5h3M718 576.5h5M711 579.5h4M717 579.5h3M712 582.5h2M712 584.5h11M712 587.5h2M720 588.5h1M711 593.5h4M717 593.5h2M722 594.5h1M715 596.5h3M718 151.5h1M717 152.5h2M714 158.5h3M714 160.5h6M718 171.5h3M778 649.5h28M781 657.5h6M804 631.5h2M1140 216.5h2M1138 237.5h2M1136 242.5h4M1301 168.5h9M1301 170.5h5M1309 171.5h5M1301 179.5h3M597 160.5h2M597 166.5h2M597 170.5h2M597 173.5h2M597 176.5h2M597 177.5h2M597 178.5h2M597 181.5h2M597 191.5h2M597 191.5h2M597 193.5h2M597 193.5h2M597 202.5h2M597 204.5h2M597 205.5h2M597 206.5h2M597 211.5h2M597 214.5h2M597 216.5h2M597 219.5h2M597 220.5h2M597 229.5h2M597 233.5h2M597 239.5h2M597 254.5h2M597 256.5h2M597 257.5h2M597 259.5h2M597 261.5h2M972 478.5h2M972 479.5h2"/><path stroke="#0000ef" d="M228 148.5h4M230 149.5h16M219 152.5h27M229 153.5h6M237 154.5h9M226 156.5h20M225 158.5h6M221 159.5h14M226 163.5h6M230 170.5h1M241 174.5h5M225 178.5h7M241 178.5h5M219 182.5h5M235 183.5h6M242 188.5h2M230 188.5h4M236 243.5h4M226 249.5h7M228 252.5h5M224 255.5h1M232 255.5h14M230 385.5h16M235 391.5h8M223 393.5h16M240 393.5h3M235 396.5h2M237 407.5h9M218 409.5h3M220 410.5h13M239 417.5h2M242 422.5h4M224 426.5h22M230 463.5h8M225 467.5h2M239 475.5h7M216 478.5h14M239 479.5h2M242 478.5h4M231 483.5h15M239 485.5h5M231 487.5h9M243 488.5h1M238 489.5h4M233 498.5h4M243 502.5h3M244 503.5h2M235 526.5h11M239 535.5h5M238 545.5h6M240 579.5h5M208 396.5h3M208 451.5h7M205 489.5h6M340 150.5h4M340 155.5h4M340 156.5h4M340 157.5h4M340 158.5h4M340 160.5h4M340 161.5h4M340 168.5h4M340 171.5h4M340 173.5h4M340 174.5h4M340 175.5h4M340 176.5h4M340 177.5h4M340 182.5h4M340 188.5h4M340 193.5h4M340 194.5h4M340 198.5h4M340 200.5h4M340 203.5h4M340 205.5h4M340 217.5h4M340 218.5h4M340 221.5h4M340 225.5h4M340 227.5h4M340 228.5h4M340 229.5h4M340 230.5h4M340 233.5h4M340 235.5h4M340 236.5h4M340 237.5h4M340 238.5h4M340 239.5h4M340 242.5h4M340 243.5h4M340 244.5h4M340 246.5h4M340 247.5h4M340 249.5h4M340 250.5h4M340 253.5h4M340 266.5h4M340 267.5h4M340 270.5h4M340 271.5h4M340 273.5h4M340 274.5h4M340 275.5h4M340 277.5h4M340 278.5h4M340 279.5h4M340 280.5h4M340 281.5h4M340 282.5h4M396 143.5h12M372 151.5h16M390 151.5h5M391 162.5h10M376 167.5h12M408 167.5h2M408 169.5h2M375 172.5h4M394 172.5h16M378 177.5h4M371 180.5h12M402 180.5h8M379 182.5h16M389 184.5h7M394 190.5h2M407 192.5h3M380 224.5h19M407 224.5h3M387 233.5h4M371 249.5h22M408 251.5h2M390 252.5h4M362 255.5h11M393 258.5h10M378 264.5h15M403 264.5h2M409 268.5h1M388 277.5h8M367 281.5h7M392 287.5h7M371 287.5h6M386 287.5h7M405 288.5h1M387 291.5h5M419 146.5h2M418 148.5h3M417 150.5h4M417 152.5h4M410 155.5h5M407 159.5h7M410 161.5h7M407 164.5h5M418 166.5h3M410 166.5h1M404 171.5h17M405 173.5h7M414 173.5h7M412 179.5h4M417 180.5h2M406 181.5h15M413 184.5h6M406 190.5h15M414 194.5h5M417 198.5h4M407 201.5h9M420 203.5h1M403 207.5h6M418 207.5h3M416 209.5h3M412 216.5h9M406 217.5h3M405 219.5h14M407 221.5h6M417 223.5h4M407 226.5h1M413 225.5h8M406 230.5h1M414 230.5h3M420 232.5h1M420 235.5h1M410 239.5h2M414 239.5h2M415 243.5h6M402 246.5h13M415 248.5h3M416 250.5h5M404 254.5h2M418 255.5h3M412 256.5h3M407 258.5h14M419 260.5h2M407 262.5h9M406 275.5h5M413 277.5h2M405 278.5h13M407 280.5h3M419 283.5h2M420 287.5h1M405 291.5h13M428 151.5h6M422 151.5h3M424 152.5h2M431 158.5h3M425 169.5h6M424 183.5h3M430 186.5h3M422 186.5h12M422 194.5h10M426 199.5h5M423 208.5h7M423 215.5h2M424 237.5h7M423 244.5h11M421 246.5h7M422 255.5h5M431 259.5h1M422 261.5h5M422 277.5h12M422 279.5h6M426 294.5h8M419 314.5h2M425 329.5h9M428 330.5h3M424 349.5h4M433 352.5h1M380 390.5h28M372 393.5h9M397 398.5h8M401 401.5h3M357 409.5h9M391 409.5h2M398 413.5h12M376 414.5h5M392 415.5h18M364 421.5h4M404 425.5h6M357 426.5h11M385 426.5h8M355 428.5h11M384 428.5h13M388 429.5h3M401 437.5h5M405 439.5h5M391 441.5h7M409 449.5h1M391 453.5h10M387 461.5h22M397 463.5h9M406 469.5h1M395 474.5h4M386 478.5h8M359 484.5h13M394 484.5h5M402 484.5h7M374 485.5h6M389 486.5h2M390 492.5h9M408 498.5h2M384 505.5h2M397 511.5h3M387 519.5h6M380 524.5h11M399 526.5h5M390 533.5h11M365 535.5h3M395 535.5h5M394 544.5h2M355 556.5h16M383 557.5h27M354 559.5h2M358 559.5h8M408 568.5h2M380 570.5h15M401 577.5h9M386 584.5h1M404 585.5h1M401 594.5h3M364 595.5h11M381 595.5h2M395 595.5h5M404 600.5h6M390 605.5h18M393 614.5h4M402 614.5h2M365 622.5h15M394 623.5h8M406 623.5h2M391 624.5h1M406 625.5h2M396 630.5h12M392 631.5h11M405 631.5h5M379 637.5h19M365 642.5h2M394 643.5h6M404 644.5h2M373 645.5h5M398 646.5h12M399 653.5h11M391 656.5h2M398 658.5h11M408 661.5h2M360 665.5h40M404 390.5h5M418 391.5h2M417 393.5h4M419 393.5h2M405 395.5h12M415 397.5h6M412 399.5h1M408 414.5h8M411 415.5h3M403 416.5h1M419 419.5h2M413 424.5h2M420 429.5h1M419 431.5h2M409 436.5h12M412 437.5h9M411 440.5h10M420 441.5h1M418 449.5h3M415 455.5h4M414 459.5h3M416 463.5h5M411 464.5h2M405 467.5h16M404 468.5h3M419 470.5h2M404 497.5h8M413 500.5h8M414 501.5h1M407 502.5h5M411 506.5h4M404 509.5h4M407 511.5h2M418 517.5h3M407 524.5h3M413 532.5h8M420 535.5h1M405 538.5h11M404 539.5h8M412 540.5h2M418 541.5h3M418 541.5h2M410 543.5h3M416 543.5h5M404 544.5h6M413 545.5h6M403 546.5h18M406 555.5h1M407 556.5h14M406 563.5h3M412 563.5h2M415 563.5h6M406 570.5h2M402 576.5h5M417 581.5h3M405 585.5h2M420 585.5h1M403 586.5h2M405 589.5h10M412 594.5h9M406 599.5h7M415 599.5h6M413 600.5h8M407 608.5h14M415 616.5h5M402 618.5h19M420 620.5h1M414 632.5h7M418 636.5h3M411 644.5h5M406 646.5h3M405 647.5h4M404 649.5h7M414 649.5h3M406 650.5h13M407 651.5h10M403 654.5h12M418 655.5h3M405 658.5h1M383 389.5h2M403 389.5h12M414 390.5h12M431 391.5h3M362 392.5h29M358 393.5h5M374 393.5h6M405 396.5h4M421 392.5h10M422 423.5h5M423 425.5h6M421 427.5h5M423 438.5h2M421 458.5h1M421 459.5h1M422 468.5h1M423 475.5h2M422 497.5h1M422 511.5h2M422 514.5h2M421 532.5h1M422 551.5h3M423 555.5h4M422 557.5h11M427 567.5h3M422 638.5h2M423 641.5h2M421 642.5h5M425 649.5h4M421 658.5h7M496 159.5h8M530 141.5h4M539 143.5h3M523 144.5h6M523 147.5h8M532 148.5h6M539 151.5h1M524 152.5h2M524 159.5h3M476 206.5h2M476 212.5h2M476 215.5h2M476 216.5h2M476 225.5h2M476 229.5h2M476 229.5h2M476 231.5h2M476 235.5h2M476 239.5h2M476 240.5h2M476 242.5h2M476 245.5h2M476 253.5h2M476 254.5h2M476 257.5h2M476 265.5h2M476 281.5h2M476 282.5h2M476 285.5h2M476 287.5h2M476 289.5h2M476 292.5h2M476 293.5h2M476 140.5h2M476 144.5h2M476 146.5h2M476 148.5h2M476 150.5h2M476 151.5h2M476 152.5h2M476 154.5h2M476 155.5h2M476 156.5h2M476 157.5h2M476 158.5h2M476 159.5h2M517 181.5h1M527 228.5h8M507 249.5h2M525 249.5h4M518 272.5h4M497 286.5h3M496 297.5h1M497 312.5h2M511 328.5h8M514 340.5h8M495 355.5h2M489 414.5h2M505 436.5h3M521 453.5h1M520 460.5h1M513 464.5h4M488 477.5h2M499 492.5h2M499 505.5h3M506 531.5h2M511 532.5h4M536 294.5h3M524 295.5h3M541 296.5h2M524 296.5h1M541 296.5h2M524 297.5h2M524 299.5h8M524 300.5h7M532 300.5h1M539 300.5h2M542 300.5h1M525 302.5h11M522 304.5h4M524 306.5h5M539 306.5h3M530 309.5h3M535 310.5h3M524 312.5h3M525 316.5h5M524 322.5h3M522 324.5h1M524 326.5h2M530 326.5h2M533 327.5h6M524 328.5h9M534 328.5h2M530 330.5h8M535 332.5h7M526 335.5h13M542 335.5h1M525 336.5h1M535 337.5h8M523 337.5h8M523 338.5h2M533 341.5h1M537 342.5h4M524 342.5h5M522 345.5h5M531 346.5h10M525 347.5h7M525 348.5h13M523 350.5h3M524 356.5h6M522 357.5h2M525 357.5h1M522 359.5h4M540 359.5h2M523 363.5h5M533 365.5h4M541 364.5h2M530 366.5h11M523 368.5h2M526 368.5h7M524 371.5h3M534 370.5h2M523 371.5h4M525 375.5h3M530 374.5h1M539 376.5h1M538 377.5h5M525 384.5h5M531 384.5h4M541 392.5h2M527 409.5h11M541 409.5h2M527 433.5h8M533 435.5h2M533 444.5h3M527 476.5h5M529 487.5h3M540 491.5h3M524 493.5h16M528 493.5h3M533 494.5h2M529 495.5h4M523 497.5h14M524 503.5h1M523 504.5h4M524 505.5h6M532 510.5h9M530 512.5h2M540 512.5h1M525 514.5h3M522 518.5h3M540 520.5h3M533 524.5h2M524 525.5h6M523 527.5h13M537 533.5h6M537 540.5h5M530 543.5h2M536 542.5h3M538 544.5h2M540 546.5h3M523 546.5h4M301 382.5h4M300 392.5h4M288 406.5h4M300 410.5h3M304 422.5h1M292 426.5h6M294 432.5h3M302 439.5h3M289 443.5h9M300 443.5h5M270 444.5h11M289 445.5h9M301 445.5h2M289 458.5h3M300 460.5h2M286 461.5h3M275 462.5h7M300 463.5h5M282 465.5h4M295 467.5h10M267 469.5h4M275 469.5h19M299 474.5h6M262 484.5h8M274 484.5h8M280 488.5h15M291 493.5h7M282 495.5h6M261 498.5h4M268 498.5h3M296 498.5h4M279 499.5h4M297 515.5h5M278 524.5h3M297 537.5h2M296 566.5h8M315 366.5h3M319 366.5h3M304 367.5h7M310 384.5h2M306 387.5h10M305 390.5h6M306 391.5h3M304 396.5h7M304 398.5h16M306 401.5h5M305 404.5h1M307 404.5h2M304 410.5h2M313 411.5h1M316 411.5h1M315 429.5h2M309 439.5h3M305 444.5h4M318 444.5h3M320 447.5h2M303 448.5h6M319 450.5h2M315 452.5h4M303 467.5h1M310 473.5h12M303 475.5h13M304 477.5h8M321 477.5h1M308 482.5h4M311 483.5h2M305 485.5h15M303 488.5h2M307 497.5h6M321 500.5h1M305 503.5h1M307 503.5h2M305 505.5h5M317 509.5h4M318 563.5h2M304 564.5h2M304 567.5h2M306 574.5h6M304 582.5h1M314 582.5h2M320 583.5h2M309 584.5h4M303 589.5h10M306 592.5h2M311 591.5h4M305 595.5h3M318 597.5h4M305 597.5h17M306 600.5h5M312 520.5h9M311 529.5h1M317 541.5h4M313 545.5h3M897 173.5h13M850 173.5h8M886 177.5h2M842 177.5h3M892 178.5h9M857 181.5h4M897 183.5h2M903 184.5h8M889 184.5h13M856 185.5h2M889 187.5h5M846 189.5h9M812 201.5h9M830 201.5h1M862 201.5h7M842 202.5h5M812 204.5h17M878 204.5h5M879 207.5h8M840 207.5h4M904 208.5h7M840 208.5h17M897 208.5h5M881 211.5h2M907 210.5h2M857 211.5h23M853 214.5h9M875 215.5h10M892 216.5h16M830 218.5h9M840 218.5h5M908 220.5h3M801 220.5h2M813 220.5h2M872 221.5h1M804 222.5h3M840 222.5h1M882 225.5h9M905 225.5h4M908 226.5h2M874 229.5h3M863 230.5h12M884 231.5h10M799 231.5h9M863 231.5h3M889 231.5h3M806 233.5h4M859 234.5h6M888 234.5h5M797 139.5h2M797 142.5h2M797 143.5h2M797 145.5h2M797 146.5h2M797 147.5h2M797 148.5h2M797 149.5h2M797 150.5h2M797 152.5h2M797 153.5h2M797 154.5h2M797 155.5h2M797 156.5h2M797 160.5h2M797 164.5h2M797 165.5h2M797 166.5h2M797 172.5h2M797 175.5h2M797 176.5h2M797 178.5h2M797 181.5h2M797 182.5h2M797 183.5h2M797 190.5h2M797 197.5h2M797 199.5h2M797 200.5h2M797 202.5h2M797 206.5h2M797 207.5h2M797 208.5h2M797 209.5h2M797 212.5h2M797 213.5h2M797 214.5h2M797 215.5h2M797 222.5h2M797 223.5h2M797 225.5h2M797 227.5h2M797 228.5h2M797 232.5h2M797 234.5h2M797 235.5h2M847 288.5h1M905 288.5h4M867 290.5h8M861 292.5h3M853 294.5h2M844 295.5h2M849 296.5h20M870 296.5h7M883 298.5h3M891 298.5h11M885 299.5h5M903 301.5h8M892 306.5h3M896 312.5h15M870 314.5h27M844 315.5h10M876 315.5h7M894 315.5h8M847 318.5h17M869 318.5h1M892 320.5h10M885 320.5h8M895 321.5h4M881 324.5h10M847 325.5h14M879 326.5h4M894 327.5h14M846 333.5h9M889 332.5h10M852 334.5h1M879 335.5h12M869 339.5h3M876 340.5h18M866 341.5h14M875 342.5h12M886 345.5h7M858 349.5h3M843 392.5h13M902 392.5h3M861 395.5h3M878 395.5h2M905 395.5h5M866 399.5h2M889 399.5h2M892 399.5h6M905 400.5h3M848 402.5h13M870 402.5h3M854 406.5h3M886 406.5h1M848 408.5h2M880 411.5h11M864 413.5h6M896 413.5h6M881 416.5h29M847 465.5h4M846 469.5h3M906 469.5h2M864 472.5h5M890 471.5h2M910 471.5h2M853 472.5h7M864 472.5h2M868 474.5h2M871 476.5h6M880 481.5h4M893 480.5h6M851 481.5h10M877 481.5h3M909 483.5h3M883 485.5h9M907 486.5h2M874 488.5h6M850 490.5h6M859 491.5h10M888 490.5h2M894 496.5h4M907 532.5h2M856 533.5h7M872 533.5h2M899 534.5h4M903 534.5h2M847 535.5h35M888 537.5h4M847 539.5h5M853 540.5h30M888 540.5h2M859 543.5h3M896 543.5h8M854 546.5h2M877 546.5h2M866 547.5h3M910 547.5h2M864 548.5h21M853 549.5h4M866 550.5h3M887 552.5h4M852 553.5h4M899 556.5h10M898 556.5h14M899 558.5h3M888 559.5h7M848 562.5h16M868 562.5h2M885 564.5h2M847 570.5h6M903 571.5h1M911 571.5h1M874 572.5h4M851 574.5h1M906 574.5h6M847 575.5h16M887 575.5h9M904 575.5h8M869 577.5h8M957 156.5h6M966 160.5h1M957 169.5h10M957 179.5h10M716 420.5h7M716 423.5h1M717 441.5h2M718 451.5h1M720 593.5h3M713 594.5h7M720 594.5h1M718 141.5h3M717 181.5h3M803 665.5h1M799 666.5h5M1136 214.5h2M1135 216.5h2M1298 196.5h9M597 162.5h2M597 164.5h2M597 165.5h2M597 170.5h2M597 172.5h2M597 186.5h2M597 189.5h2M597 198.5h2M597 200.5h2M597 204.5h2M597 210.5h2M597 210.5h2M597 227.5h2M597 236.5h2M597 240.5h2M597 242.5h2M597 246.5h2M597 247.5h2M597 249.5h2M972 475.5h2M972 476.5h2M972 477.5h2M858 368.5h2M858 369.5h2M859 370.5h2M859 371.5h2M859 372.5h2M860 373.5h2M860 374.5h2M860 375.5h2M860 376.5h2"/><path stroke="#001fff" d="M232 148.5h2M233 170.5h8M232 172.5h4M234 176.5h7M227 181.5h10M232 182.5h14M229 185.5h5M228 240.5h2M232 244.5h1M224 245.5h3M244 252.5h2M223 385.5h1M236 398.5h5M239 404.5h3M228 409.5h6M237 413.5h9M242 423.5h4M237 425.5h4M238 427.5h8M231 461.5h10M242 463.5h4M236 467.5h3M243 468.5h3M242 468.5h1M234 470.5h12M229 486.5h4M229 489.5h8M236 492.5h4M242 494.5h4M239 498.5h3M236 503.5h5M225 505.5h6M240 505.5h6M340 151.5h4M340 152.5h4M340 153.5h4M340 162.5h4M340 166.5h4M340 172.5h4M340 179.5h4M340 180.5h4M340 181.5h4M340 183.5h4M340 189.5h4M340 191.5h4M340 207.5h4M340 222.5h4M340 226.5h4M340 231.5h4M340 232.5h4M340 248.5h4M340 254.5h4M341 224.5h2M341 243.5h2M341 244.5h2M340 265.5h4M340 268.5h4M340 272.5h4M341 266.5h2M341 274.5h2M397 146.5h11M375 152.5h17M398 153.5h12M401 164.5h1M404 164.5h2M407 166.5h3M405 182.5h2M384 196.5h16M405 210.5h5M394 234.5h8M403 234.5h2M385 236.5h4M394 248.5h1M396 255.5h2M401 262.5h9M407 277.5h3M381 281.5h6M420 144.5h1M407 147.5h4M414 147.5h2M413 149.5h3M417 155.5h3M418 170.5h3M407 176.5h14M416 177.5h3M403 203.5h1M412 204.5h4M411 207.5h2M406 228.5h15M418 230.5h1M418 233.5h1M417 235.5h1M419 244.5h2M407 248.5h3M406 251.5h4M413 255.5h2M419 256.5h1M416 257.5h5M419 261.5h2M409 263.5h12M417 264.5h4M406 272.5h2M409 272.5h12M420 278.5h1M411 280.5h10M410 281.5h10M410 282.5h5M407 286.5h9M411 287.5h4M406 288.5h15M417 290.5h4M405 290.5h5M414 290.5h7M404 294.5h13M422 147.5h12M427 151.5h4M433 152.5h1M432 158.5h2M422 160.5h12M425 163.5h3M422 166.5h12M432 180.5h2M422 180.5h12M423 184.5h4M422 187.5h6M423 188.5h3M423 190.5h11M423 192.5h5M421 206.5h3M422 208.5h3M432 215.5h2M431 217.5h3M429 219.5h5M423 223.5h5M424 228.5h3M429 230.5h5M432 232.5h2M421 233.5h3M421 236.5h2M423 238.5h5M423 239.5h11M424 253.5h10M433 259.5h1M422 260.5h3M424 263.5h2M421 269.5h13M424 270.5h10M422 273.5h12M421 276.5h2M423 288.5h2M422 290.5h4M429 290.5h2M422 297.5h12M420 340.5h14M409 403.5h1M396 404.5h14M378 409.5h8M357 412.5h42M406 412.5h4M377 449.5h22M382 450.5h21M392 457.5h15M403 474.5h5M406 477.5h4M385 484.5h6M407 503.5h3M396 508.5h4M397 515.5h3M375 524.5h2M409 524.5h1M401 535.5h1M372 540.5h25M396 546.5h2M399 546.5h7M399 572.5h2M390 577.5h3M391 594.5h8M406 607.5h4M406 610.5h3M392 622.5h5M399 633.5h11M397 635.5h10M403 640.5h7M392 653.5h5M409 665.5h1M418 390.5h2M414 391.5h2M406 392.5h9M418 394.5h3M403 399.5h4M417 399.5h4M412 405.5h9M416 409.5h5M415 411.5h6M420 415.5h1M413 430.5h8M406 439.5h3M416 447.5h5M416 451.5h4M407 455.5h1M404 459.5h6M404 470.5h10M416 482.5h3M420 493.5h1M406 494.5h14M404 496.5h3M410 497.5h11M420 499.5h1M419 502.5h2M414 509.5h2M413 512.5h8M403 513.5h4M411 513.5h7M420 515.5h1M411 516.5h8M403 517.5h2M402 518.5h3M412 524.5h6M403 525.5h18M418 529.5h3M420 548.5h1M410 550.5h8M416 554.5h2M416 557.5h3M408 561.5h11M419 568.5h2M406 569.5h15M415 573.5h6M420 576.5h1M405 579.5h16M417 582.5h4M411 585.5h4M407 586.5h2M416 587.5h5M416 589.5h2M413 590.5h3M413 597.5h4M418 602.5h2M406 611.5h1M417 611.5h4M404 631.5h8M404 632.5h12M419 633.5h2M409 636.5h3M416 637.5h2M410 639.5h2M415 639.5h6M416 643.5h1M418 649.5h3M404 653.5h10M417 658.5h4M404 660.5h11M412 661.5h1M373 389.5h4M419 389.5h4M395 392.5h21M390 393.5h15M408 393.5h26M428 396.5h2M422 389.5h12M421 392.5h4M421 400.5h8M421 402.5h10M422 423.5h3M428 427.5h2M422 441.5h2M422 447.5h2M431 459.5h3M422 471.5h3M421 473.5h6M421 491.5h1M422 493.5h3M422 495.5h3M425 497.5h9M421 503.5h2M423 510.5h6M421 515.5h8M425 526.5h3M433 532.5h1M422 534.5h1M422 535.5h8M433 536.5h1M423 538.5h4M423 541.5h2M422 558.5h2M423 561.5h3M422 570.5h6M422 577.5h2M422 581.5h7M422 587.5h2M431 591.5h3M421 592.5h5M422 597.5h3M421 605.5h4M421 611.5h13M422 617.5h2M422 624.5h6M422 631.5h9M427 631.5h7M423 644.5h5M422 648.5h1M423 650.5h2M422 654.5h12M423 655.5h3M422 661.5h8M431 662.5h3M422 665.5h2M523 141.5h2M541 143.5h1M533 144.5h2M530 145.5h2M535 146.5h7M523 146.5h2M535 146.5h3M523 148.5h3M539 153.5h3M530 154.5h8M524 155.5h2M532 155.5h9M523 156.5h15M522 157.5h2M476 208.5h2M476 209.5h2M476 210.5h2M476 211.5h2M476 217.5h2M476 222.5h2M476 223.5h2M476 226.5h2M476 227.5h2M476 232.5h2M476 260.5h2M476 263.5h2M476 264.5h2M476 270.5h2M476 271.5h2M476 273.5h2M476 276.5h2M476 279.5h2M476 280.5h2M476 284.5h2M476 294.5h2M476 295.5h2M476 139.5h2M506 398.5h3M513 398.5h7M518 414.5h4M518 550.5h2M524 294.5h8M535 296.5h2M537 298.5h2M541 299.5h2M534 300.5h2M538 302.5h2M532 304.5h10M525 305.5h10M537 306.5h1M529 307.5h8M537 320.5h3M542 321.5h1M531 322.5h3M535 322.5h3M536 327.5h5M540 328.5h2M535 329.5h7M530 331.5h2M526 333.5h1M523 335.5h2M525 339.5h17M528 345.5h15M523 346.5h7M534 347.5h5M525 353.5h6M523 362.5h4M537 363.5h2M532 363.5h3M525 366.5h12M526 367.5h2M540 370.5h1M532 372.5h2M535 377.5h1M534 379.5h1M530 380.5h3M534 380.5h2M523 383.5h2M530 389.5h10M542 476.5h1M534 486.5h7M534 487.5h7M525 488.5h4M525 490.5h9M528 491.5h5M538 493.5h3M542 493.5h1M523 494.5h6M535 494.5h3M534 495.5h2M540 495.5h2M525 498.5h3M542 498.5h1M530 499.5h8M540 501.5h2M524 503.5h6M524 510.5h3M523 512.5h13M533 512.5h2M524 519.5h2M532 521.5h3M532 522.5h3M524 524.5h5M523 526.5h8M532 527.5h2M537 527.5h2M525 528.5h2M534 531.5h9M526 533.5h5M531 533.5h2M526 534.5h10M539 534.5h4M530 535.5h4M523 539.5h14M529 541.5h7M524 541.5h3M528 541.5h2M527 544.5h6M542 544.5h1M529 546.5h4M289 452.5h5M291 454.5h5M298 458.5h4M289 465.5h4M302 471.5h3M299 478.5h2M283 484.5h5M298 492.5h2M301 492.5h4M306 384.5h2M314 389.5h6M307 393.5h3M319 400.5h1M314 401.5h8M306 404.5h1M317 404.5h3M303 405.5h1M314 408.5h8M303 409.5h11M306 411.5h1M306 417.5h11M317 418.5h1M315 433.5h4M320 435.5h1M314 439.5h4M305 439.5h3M304 440.5h3M314 444.5h7M307 444.5h5M312 451.5h3M321 452.5h1M305 466.5h4M311 468.5h9M304 468.5h16M316 472.5h2M307 473.5h1M319 480.5h3M319 481.5h3M320 483.5h2M313 488.5h2M306 492.5h5M315 495.5h7M314 499.5h4M307 507.5h1M306 508.5h1M314 555.5h3M305 556.5h2M315 558.5h1M304 562.5h2M314 562.5h2M306 563.5h2M304 570.5h4M311 570.5h2M319 571.5h3M315 574.5h7M304 579.5h3M308 582.5h3M306 583.5h1M312 584.5h5M319 591.5h2M315 595.5h7M314 596.5h4M843 174.5h26M845 175.5h16M866 175.5h9M886 175.5h6M865 176.5h3M910 179.5h1M881 186.5h12M904 187.5h7M901 187.5h4M885 189.5h5M895 199.5h14M881 200.5h5M823 204.5h4M835 203.5h2M902 204.5h2M857 205.5h17M829 207.5h3M863 208.5h6M817 211.5h1M802 212.5h5M821 213.5h14M891 212.5h13M852 215.5h1M820 216.5h22M859 216.5h12M847 217.5h2M853 217.5h7M877 217.5h8M859 219.5h3M813 222.5h19M863 222.5h12M809 229.5h21M894 229.5h17M838 230.5h6M816 231.5h2M903 231.5h8M857 232.5h9M869 233.5h18M800 234.5h6M797 151.5h2M797 157.5h2M797 158.5h2M797 159.5h2M797 161.5h2M797 162.5h2M797 163.5h2M797 167.5h2M797 168.5h2M797 169.5h2M797 173.5h2M797 174.5h2M797 180.5h2M797 189.5h2M797 192.5h2M797 193.5h2M797 194.5h2M797 198.5h2M797 201.5h2M797 203.5h2M797 210.5h2M797 211.5h2M797 216.5h2M797 218.5h2M797 219.5h2M797 221.5h2M797 231.5h2M797 233.5h2M871 288.5h3M880 288.5h4M860 290.5h4M896 290.5h15M897 294.5h14M868 295.5h13M894 295.5h5M845 296.5h2M850 299.5h4M890 299.5h5M907 299.5h4M848 300.5h4M847 301.5h2M861 302.5h4M880 302.5h7M848 311.5h2M861 311.5h14M880 311.5h5M863 313.5h25M844 314.5h17M852 318.5h3M880 318.5h4M893 319.5h5M851 320.5h8M902 320.5h2M887 321.5h1M893 324.5h2M844 326.5h10M862 326.5h7M904 331.5h3M873 332.5h5M847 340.5h1M848 343.5h11M872 343.5h4M883 343.5h13M908 399.5h2M882 404.5h9M895 403.5h5M879 404.5h6M845 406.5h3M862 406.5h1M894 406.5h1M864 407.5h5M843 409.5h9M898 409.5h3M849 410.5h2M877 414.5h2M881 414.5h3M846 415.5h9M908 415.5h2M865 416.5h5M888 417.5h14M847 419.5h7M880 466.5h23M903 466.5h6M911 467.5h1M860 468.5h5M886 470.5h7M848 471.5h14M878 472.5h8M849 473.5h2M869 474.5h9M862 475.5h28M853 476.5h7M886 477.5h7M901 477.5h6M846 477.5h4M850 478.5h6M853 482.5h2M887 483.5h6M898 482.5h3M906 482.5h1M874 483.5h5M874 484.5h6M857 487.5h1M849 487.5h9M884 488.5h2M887 488.5h3M909 489.5h3M848 491.5h3M904 496.5h4M848 533.5h2M875 533.5h8M885 535.5h10M903 542.5h9M861 546.5h5M847 548.5h7M903 548.5h8M858 549.5h9M906 554.5h6M863 556.5h11M853 560.5h10M871 560.5h9M876 562.5h2M903 562.5h9M880 564.5h4M910 565.5h2M853 566.5h5M897 566.5h2M853 571.5h2M863 571.5h17M903 571.5h2M873 574.5h11M902 574.5h2M868 575.5h15M878 577.5h6M906 577.5h2M718 429.5h5M718 148.5h3M1312 196.5h2M597 169.5h2M597 171.5h2M597 175.5h2M597 180.5h2M597 182.5h2M597 185.5h2M597 190.5h2M597 192.5h2M597 203.5h2M597 212.5h2M597 213.5h2M597 214.5h2M597 215.5h2M597 216.5h2M597 218.5h2M597 219.5h2M597 220.5h2M597 223.5h2M597 224.5h2M597 228.5h2M597 232.5h2M597 234.5h2M597 237.5h2M597 238.5h2M597 244.5h2M597 245.5h2M597 253.5h2"/><path stroke="#004fff" d="M237 153.5h9M237 172.5h5M242 187.5h2M236 188.5h7M240 240.5h2M236 242.5h4M241 244.5h5M236 245.5h10M235 251.5h8M237 387.5h5M245 387.5h1M243 461.5h3M230 473.5h16M239 478.5h2M240 484.5h2M243 484.5h3M243 498.5h1M341 150.5h2M341 165.5h2M341 175.5h2M341 181.5h2M341 184.5h2M341 193.5h2M341 207.5h2M341 247.5h2M341 248.5h2M341 279.5h2M395 167.5h11M407 191.5h3M405 241.5h2M406 263.5h4M393 271.5h5M397 277.5h6M389 281.5h21M392 286.5h7M402 291.5h8M419 145.5h2M418 165.5h3M418 166.5h3M417 179.5h2M406 192.5h4M414 192.5h6M415 193.5h6M420 214.5h1M416 217.5h4M407 225.5h1M415 242.5h6M407 252.5h13M404 261.5h3M413 261.5h4M413 276.5h2M419 282.5h2M404 283.5h12M418 283.5h3M415 295.5h6M423 147.5h4M421 148.5h13M421 150.5h5M428 150.5h6M424 153.5h10M423 157.5h3M431 157.5h3M423 163.5h11M423 171.5h10M422 176.5h1M423 178.5h2M422 179.5h1M428 180.5h1M424 182.5h3M422 185.5h6M430 185.5h3M423 189.5h6M422 198.5h1M428 206.5h4M423 207.5h7M429 209.5h5M426 210.5h4M423 213.5h2M423 215.5h7M422 216.5h3M428 216.5h2M423 219.5h1M421 226.5h3M433 228.5h1M433 235.5h1M424 236.5h7M423 239.5h7M429 246.5h5M421 249.5h2M423 254.5h1M431 258.5h1M422 279.5h4M426 281.5h4M423 283.5h11M421 285.5h4M426 288.5h5M426 293.5h8M380 389.5h28M392 414.5h18M396 426.5h14M389 485.5h2M397 485.5h13M395 521.5h15M399 524.5h7M390 528.5h12M383 556.5h27M398 639.5h2M408 645.5h2M406 391.5h7M417 392.5h4M408 413.5h8M413 418.5h8M420 428.5h1M413 429.5h4M407 437.5h4M411 439.5h10M403 440.5h18M410 453.5h11M407 475.5h13M420 506.5h1M410 518.5h1M418 530.5h1M413 531.5h8M418 540.5h3M413 544.5h6M405 545.5h16M420 550.5h1M412 555.5h5M418 555.5h3M417 560.5h4M414 571.5h4M405 581.5h4M407 607.5h14M406 630.5h10M414 631.5h7M420 651.5h1M431 390.5h3M421 391.5h10M430 401.5h4M422 402.5h12M428 406.5h6M421 411.5h4M422 420.5h3M422 422.5h5M423 437.5h2M422 445.5h1M421 452.5h2M422 456.5h2M421 457.5h1M425 468.5h9M422 470.5h2M431 473.5h3M422 478.5h10M421 481.5h8M422 483.5h5M421 484.5h7M422 485.5h2M426 492.5h8M421 495.5h2M422 496.5h1M433 501.5h1M423 501.5h3M423 505.5h6M422 507.5h12M422 510.5h2M426 511.5h8M422 513.5h2M425 514.5h6M423 517.5h6M421 519.5h1M426 525.5h5M423 525.5h1M428 531.5h3M421 531.5h1M424 532.5h6M432 538.5h2M422 544.5h5M429 544.5h5M422 548.5h3M423 554.5h4M431 555.5h3M422 556.5h11M421 558.5h6M422 563.5h12M422 565.5h4M421 566.5h5M427 566.5h3M423 568.5h6M422 571.5h3M426 571.5h8M423 580.5h9M421 585.5h13M422 591.5h7M423 596.5h10M426 617.5h4M423 620.5h4M428 621.5h1M423 621.5h3M430 623.5h4M422 636.5h2M422 637.5h2M423 640.5h2M421 641.5h5M428 643.5h2M431 645.5h3M427 648.5h7M425 648.5h4M422 657.5h12M428 661.5h2M522 140.5h15M523 140.5h15M524 142.5h6M539 142.5h3M523 143.5h11M524 145.5h2M532 147.5h6M539 150.5h1M540 151.5h2M524 154.5h2M476 220.5h2M476 221.5h2M476 224.5h2M476 228.5h2M476 237.5h2M476 246.5h2M476 247.5h2M476 255.5h2M476 268.5h2M476 283.5h2M476 288.5h2M541 295.5h2M525 308.5h2M533 308.5h10M525 309.5h3M535 309.5h3M541 317.5h2M530 320.5h3M533 326.5h6M527 329.5h1M523 331.5h1M535 331.5h7M522 332.5h7M531 333.5h2M522 333.5h1M535 336.5h8M533 338.5h7M537 341.5h4M539 353.5h4M539 353.5h3M525 355.5h11M532 356.5h3M537 358.5h6M533 364.5h4M530 365.5h11M523 367.5h2M531 368.5h6M524 370.5h3M538 373.5h5M525 374.5h3M525 376.5h9M525 377.5h2M538 380.5h5M525 382.5h12M541 384.5h2M542 385.5h1M536 484.5h2M539 490.5h4M537 491.5h1M524 492.5h16M524 502.5h1M534 502.5h1M542 505.5h1M528 520.5h9M524 522.5h2M536 524.5h2M538 525.5h5M538 529.5h5M537 532.5h6M535 535.5h2M524 536.5h19M530 542.5h2M540 545.5h3M300 462.5h5M302 466.5h3M314 363.5h2M317 363.5h5M317 364.5h2M303 369.5h8M313 369.5h6M320 369.5h2M303 370.5h3M315 384.5h4M306 386.5h10M314 392.5h2M307 400.5h2M320 400.5h2M313 410.5h1M316 410.5h1M314 414.5h8M317 434.5h1M314 435.5h2M321 438.5h1M305 441.5h5M312 441.5h2M307 442.5h6M305 443.5h4M313 445.5h2M312 448.5h1M306 465.5h3M317 466.5h1M320 466.5h2M310 471.5h12M313 480.5h5M303 483.5h2M319 493.5h3M305 495.5h6M306 497.5h1M305 498.5h2M321 499.5h1M316 504.5h2M321 505.5h1M316 507.5h3M305 561.5h3M318 562.5h2M310 563.5h1M307 567.5h10M304 572.5h6M304 575.5h3M316 576.5h2M304 581.5h1M311 581.5h1M314 581.5h4M311 583.5h2M313 587.5h9M306 591.5h2M318 596.5h4M306 599.5h5M319 603.5h3M863 172.5h25M897 172.5h13M870 173.5h21M908 174.5h2M844 176.5h4M886 176.5h2M902 176.5h2M864 178.5h12M848 180.5h21M901 181.5h2M906 181.5h5M848 183.5h1M903 183.5h8M902 184.5h9M842 185.5h9M865 186.5h2M855 186.5h11M907 187.5h4M886 202.5h2M907 202.5h2M858 203.5h1M866 203.5h1M908 205.5h3M879 206.5h8M904 207.5h7M881 210.5h2M884 211.5h10M865 213.5h5M853 213.5h9M855 215.5h18M830 217.5h9M840 217.5h5M882 218.5h1M864 219.5h3M908 219.5h3M898 220.5h13M846 223.5h15M887 224.5h4M840 226.5h18M856 229.5h2M884 230.5h10M880 232.5h6M858 234.5h3M897 288.5h5M847 292.5h11M901 292.5h1M853 293.5h2M902 293.5h4M864 294.5h2M906 295.5h5M883 297.5h3M891 297.5h11M867 300.5h6M896 301.5h2M891 302.5h10M904 302.5h7M892 305.5h3M891 312.5h14M851 317.5h4M899 316.5h3M847 317.5h17M902 318.5h7M892 319.5h10M895 320.5h4M897 321.5h1M900 321.5h6M881 323.5h10M879 325.5h4M877 327.5h15M894 326.5h14M907 328.5h4M893 332.5h4M901 331.5h1M846 332.5h9M906 332.5h2M852 333.5h1M879 334.5h12M876 339.5h18M909 339.5h2M901 341.5h10M849 347.5h5M882 346.5h6M846 347.5h3M869 348.5h27M876 349.5h7M897 351.5h8M849 394.5h5M861 394.5h3M892 394.5h11M900 396.5h4M866 398.5h2M870 399.5h3M882 400.5h3M843 403.5h3M849 404.5h7M903 404.5h7M892 405.5h1M844 406.5h7M848 407.5h2M899 408.5h4M864 410.5h10M880 410.5h11M908 410.5h2M894 415.5h10M873 418.5h8M870 465.5h13M889 465.5h3M851 466.5h6M850 468.5h6M846 468.5h3M890 469.5h6M906 468.5h2M911 468.5h1M864 471.5h5M868 473.5h2M907 474.5h5M892 474.5h13M903 478.5h5M877 478.5h15M892 478.5h6M880 480.5h4M899 481.5h2M872 482.5h8M894 484.5h3M907 485.5h2M874 487.5h6M859 490.5h10M890 492.5h6M866 496.5h26M889 532.5h9M851 537.5h5M901 537.5h6M885 538.5h6M891 541.5h14M907 540.5h5M871 543.5h15M854 545.5h2M851 547.5h9M889 547.5h3M870 551.5h10M887 551.5h4M906 553.5h2M899 555.5h10M861 556.5h1M849 558.5h3M868 558.5h8M884 558.5h5M849 565.5h23M889 566.5h4M847 569.5h6M894 570.5h2M903 570.5h1M849 572.5h3M865 573.5h3M860 574.5h6M889 574.5h10M597 209.5h2M597 235.5h2M597 241.5h2M597 242.5h2"/><path stroke="#007fff" d="M242 143.5h1M240 163.5h6M245 179.5h1M242 240.5h2M244 241.5h2M244 251.5h2M245 425.5h1M243 467.5h3M242 480.5h4M240 496.5h2M341 155.5h2M341 157.5h2M341 173.5h2M341 217.5h2M341 220.5h2M341 221.5h2M341 223.5h2M341 223.5h2M341 225.5h2M341 226.5h2M341 227.5h2M341 235.5h2M341 236.5h2M341 237.5h2M341 239.5h2M341 240.5h2M341 242.5h2M341 243.5h2M341 249.5h2M341 262.5h2M341 264.5h2M341 265.5h2M341 265.5h2M341 268.5h2M341 270.5h2M341 272.5h2M341 273.5h2M341 277.5h2M341 280.5h2M341 281.5h2M407 165.5h3M419 156.5h2M412 203.5h4M417 221.5h4M413 232.5h6M417 241.5h4M419 243.5h2M417 289.5h4M423 143.5h3M429 145.5h5M422 154.5h11M424 155.5h8M422 159.5h12M425 162.5h3M433 162.5h1M422 165.5h12M428 177.5h6M432 179.5h2M428 184.5h6M423 201.5h8M424 205.5h10M433 209.5h1M430 213.5h4M433 214.5h1M431 216.5h3M429 218.5h5M427 220.5h2M423 222.5h5M426 233.5h3M423 237.5h5M421 243.5h4M428 251.5h6M423 252.5h7M422 258.5h4M422 264.5h9M423 272.5h3M422 281.5h9M429 284.5h5M422 289.5h4M429 289.5h2M422 293.5h3M400 428.5h7M399 544.5h11M397 559.5h13M406 595.5h4M418 400.5h3M413 416.5h7M419 420.5h2M416 424.5h4M416 446.5h5M411 452.5h5M410 496.5h11M420 514.5h1M417 538.5h4M416 580.5h5M417 588.5h1M420 588.5h1M413 624.5h8M433 392.5h1M431 392.5h3M431 394.5h1M423 394.5h8M421 395.5h8M421 401.5h10M422 405.5h4M422 408.5h3M422 410.5h6M431 410.5h2M425 412.5h1M429 416.5h1M421 418.5h8M422 418.5h12M422 424.5h9M426 432.5h3M421 440.5h13M422 446.5h2M423 450.5h3M428 450.5h2M429 452.5h2M422 455.5h4M423 456.5h3M424 459.5h5M422 470.5h3M422 471.5h7M433 472.5h1M421 472.5h1M421 478.5h13M431 480.5h3M422 492.5h3M425 496.5h9M422 505.5h12M423 509.5h6M422 511.5h11M432 513.5h2M421 514.5h8M431 514.5h3M422 515.5h7M423 516.5h2M430 517.5h4M421 518.5h7M425 525.5h3M422 531.5h5M433 531.5h1M422 532.5h3M422 533.5h1M428 534.5h5M433 535.5h1M421 536.5h6M425 538.5h9M423 540.5h2M421 548.5h3M423 550.5h6M428 554.5h1M422 557.5h2M427 561.5h1M421 563.5h4M423 564.5h8M423 568.5h11M431 569.5h1M422 569.5h6M422 574.5h9M422 580.5h7M433 584.5h1M422 586.5h3M426 587.5h3M423 589.5h5M431 590.5h3M421 591.5h5M421 593.5h7M433 597.5h1M426 597.5h8M423 603.5h11M423 608.5h7M422 613.5h11M422 616.5h4M422 623.5h6M422 630.5h9M422 639.5h5M423 642.5h2M422 645.5h2M431 648.5h3M423 649.5h2M422 651.5h2M427 653.5h1M423 659.5h1M431 661.5h3M424 666.5h6M535 145.5h7M539 147.5h3M530 148.5h9M524 150.5h3M533 153.5h3M539 152.5h3M526 154.5h3M535 157.5h7M524 158.5h14M540 158.5h2M529 159.5h13M537 297.5h2M538 301.5h2M536 305.5h1M542 315.5h1M542 320.5h1M530 324.5h13M540 326.5h3M529 333.5h11M540 347.5h3M525 352.5h6M523 353.5h3M528 353.5h11M542 362.5h1M537 362.5h2M532 371.5h2M536 371.5h6M535 374.5h5M529 377.5h3M530 488.5h13M531 498.5h6M537 498.5h2M523 501.5h12M531 503.5h3M538 504.5h5M531 504.5h3M535 504.5h8M522 507.5h2M529 508.5h13M523 511.5h13M526 513.5h4M525 515.5h16M529 519.5h3M536 521.5h3M540 522.5h1M523 523.5h2M528 523.5h4M531 525.5h5M532 526.5h2M542 527.5h1M534 528.5h2M535 533.5h7M540 535.5h3M527 537.5h3M531 538.5h9M529 540.5h7M541 541.5h2M525 545.5h4M305 362.5h3M321 364.5h1M311 370.5h1M314 388.5h6M314 396.5h6M313 401.5h2M306 403.5h1M321 403.5h1M307 410.5h5M306 416.5h11M305 417.5h4M317 417.5h1M320 434.5h1M314 438.5h4M316 442.5h5M314 443.5h7M314 453.5h8M315 465.5h2M311 467.5h9M306 480.5h6M307 487.5h5M307 489.5h15M321 498.5h1M304 499.5h3M311 499.5h1M311 503.5h2M315 503.5h7M310 504.5h5M307 506.5h1M319 555.5h3M304 569.5h4M319 570.5h3M312 575.5h2M306 576.5h4M314 576.5h6M312 580.5h1M312 583.5h5M310 586.5h10M310 588.5h11M320 589.5h2M304 592.5h2M312 593.5h3M315 600.5h5M853 172.5h9M894 173.5h7M893 175.5h3M850 176.5h8M876 185.5h5M900 186.5h3M904 186.5h7M895 187.5h5M875 189.5h7M864 199.5h6M874 201.5h8M815 203.5h5M823 203.5h4M871 203.5h36M889 205.5h16M853 207.5h1M894 208.5h1M903 210.5h3M896 211.5h15M821 212.5h14M904 214.5h7M891 215.5h20M871 216.5h2M818 217.5h3M897 219.5h5M837 220.5h14M903 222.5h3M897 223.5h9M867 226.5h18M899 233.5h11M861 298.5h3M861 298.5h4M908 298.5h3M864 299.5h9M861 301.5h4M871 303.5h3M863 312.5h25M864 314.5h5M886 318.5h4M893 318.5h5M851 319.5h8M879 319.5h4M845 323.5h32M870 326.5h6M849 327.5h7M864 327.5h15M902 327.5h2M846 331.5h2M851 331.5h20M847 339.5h1M845 342.5h2M897 342.5h10M895 345.5h16M888 349.5h3M896 395.5h1M845 398.5h7M908 398.5h2M842 399.5h7M861 399.5h6M882 399.5h1M882 403.5h9M845 405.5h3M862 405.5h1M871 406.5h6M843 407.5h4M853 409.5h3M870 409.5h4M875 409.5h17M872 413.5h2M843 414.5h12M861 417.5h2M908 417.5h2M857 467.5h4M909 469.5h3M861 473.5h2M849 474.5h15M886 476.5h7M901 476.5h6M866 478.5h9M907 478.5h2M887 482.5h6M908 485.5h4M847 486.5h7M857 486.5h1M881 487.5h4M895 488.5h10M900 488.5h12M894 489.5h13M900 492.5h10M904 495.5h4M848 532.5h2M901 532.5h4M885 534.5h10M907 543.5h1M847 545.5h4M861 545.5h5M866 546.5h2M905 550.5h7M892 551.5h20M854 555.5h8M847 557.5h5M877 556.5h17M853 559.5h10M871 559.5h9M910 564.5h2M883 566.5h29M889 568.5h2M906 569.5h6M857 572.5h3M861 572.5h1M884 572.5h11"/><path stroke="#00afff" d="M239 180.5h7M341 149.5h2M341 150.5h2M341 152.5h2M341 155.5h2M341 158.5h2M341 160.5h2M341 161.5h2M341 163.5h2M341 164.5h2M341 168.5h2M341 169.5h2M341 173.5h2M341 174.5h2M341 176.5h2M341 180.5h2M341 182.5h2M341 183.5h2M341 185.5h2M341 186.5h2M341 188.5h2M341 189.5h2M341 191.5h2M341 192.5h2M341 193.5h2M341 195.5h2M341 196.5h2M341 200.5h2M341 201.5h2M341 206.5h2M341 219.5h2M341 228.5h2M341 229.5h2M341 231.5h2M341 233.5h2M341 237.5h2M341 239.5h2M341 245.5h2M341 246.5h2M341 247.5h2M341 250.5h2M341 252.5h2M341 253.5h2M341 254.5h2M341 268.5h2M341 269.5h2M341 271.5h2M341 274.5h2M341 276.5h2M341 278.5h2M423 146.5h4M428 147.5h4M428 152.5h2M424 156.5h10M423 159.5h8M423 161.5h3M423 162.5h2M422 166.5h12M422 168.5h12M429 170.5h3M424 173.5h4M429 179.5h1M428 179.5h1M422 182.5h10M422 191.5h2M425 192.5h4M421 194.5h2M422 197.5h1M432 208.5h2M429 208.5h5M426 209.5h4M423 210.5h4M428 214.5h1M423 214.5h7M429 220.5h5M421 225.5h3M433 227.5h1M427 228.5h2M433 234.5h1M423 238.5h7M422 242.5h3M421 248.5h2M429 248.5h5M424 250.5h3M431 252.5h3M431 256.5h2M427 261.5h4M431 264.5h3M423 266.5h6M425 275.5h2M422 278.5h4M426 280.5h4M423 282.5h11M421 284.5h4M422 287.5h4M424 291.5h5M419 522.5h2M422 390.5h7M430 400.5h4M428 405.5h6M428 408.5h5M422 409.5h2M422 412.5h2M422 414.5h2M425 414.5h5M422 416.5h7M421 416.5h6M422 419.5h3M423 421.5h11M425 424.5h9M429 425.5h5M432 427.5h2M422 432.5h2M423 453.5h3M422 455.5h2M432 456.5h2M426 457.5h7M422 462.5h4M431 464.5h2M423 464.5h5M422 469.5h2M422 474.5h1M422 477.5h10M433 478.5h1M423 479.5h3M429 479.5h5M421 480.5h8M422 482.5h5M430 484.5h4M421 486.5h4M426 491.5h8M421 494.5h2M423 500.5h9M433 500.5h1M423 504.5h6M422 506.5h12M426 510.5h8M425 513.5h6M429 518.5h4M422 522.5h4M422 523.5h7M426 524.5h5M428 530.5h3M424 531.5h6M425 533.5h1M429 539.5h2M422 539.5h12M422 541.5h7M422 542.5h8M422 543.5h5M429 543.5h5M421 546.5h3M422 547.5h3M422 553.5h2M427 553.5h1M431 554.5h3M432 557.5h2M422 561.5h3M433 562.5h1M428 562.5h6M432 566.5h1M423 575.5h6M422 576.5h3M423 579.5h9M421 584.5h13M422 585.5h2M429 587.5h5M422 588.5h7M422 590.5h7M422 595.5h6M428 605.5h6M423 607.5h2M432 607.5h1M427 616.5h7M428 620.5h1M427 623.5h2M422 631.5h3M422 633.5h6M430 634.5h2M422 634.5h6M432 642.5h2M431 644.5h3M428 646.5h1M427 647.5h7M422 650.5h8M428 656.5h6M422 656.5h12M432 659.5h2M428 660.5h2M422 662.5h10M422 664.5h12M429 665.5h5M422 666.5h4M522 139.5h15M541 140.5h1M540 141.5h2M540 148.5h2M540 150.5h2M525 307.5h2M539 307.5h3M533 315.5h2M541 316.5h2M525 320.5h3M531 332.5h2M533 337.5h7M542 339.5h1M534 350.5h9M539 352.5h4M525 354.5h11M537 354.5h4M537 357.5h6M523 361.5h2M528 361.5h4M530 362.5h6M537 363.5h3M531 367.5h6M541 383.5h2M542 384.5h1M539 489.5h4M537 490.5h6M540 495.5h3M539 502.5h2M534 505.5h7M526 519.5h8M539 519.5h2M533 523.5h7M538 528.5h5M535 546.5h2M314 362.5h2M319 362.5h3M314 391.5h2M312 393.5h4M308 403.5h5M306 405.5h12M312 417.5h3M306 438.5h3M312 438.5h1M309 440.5h2M312 487.5h8M319 492.5h3M306 496.5h1M317 497.5h3M309 498.5h10M321 504.5h1M316 506.5h3M305 555.5h5M321 561.5h1M312 565.5h2M316 575.5h2M311 582.5h2M317 582.5h3M304 587.5h5M319 602.5h3M893 172.5h2M900 174.5h5M848 177.5h46M890 181.5h7M870 183.5h22M865 185.5h2M873 185.5h2M886 201.5h2M908 204.5h3M856 207.5h20M865 212.5h5M898 218.5h13M873 219.5h13M892 221.5h13M887 223.5h4M847 231.5h6M858 233.5h3M845 297.5h9M896 300.5h2M891 301.5h10M891 311.5h14M851 316.5h4M906 316.5h5M849 324.5h25M888 325.5h12M877 326.5h15M891 327.5h10M907 327.5h4M893 331.5h4M902 339.5h2M849 346.5h5M869 347.5h27M900 349.5h11M875 350.5h12M897 350.5h8M876 398.5h27M874 404.5h2M895 407.5h1M899 407.5h4M893 409.5h1M885 414.5h6M906 413.5h4M864 417.5h8M873 417.5h8M850 467.5h6M890 468.5h6M903 470.5h9M896 472.5h16M907 473.5h5M881 474.5h8M911 475.5h1M894 477.5h2M903 477.5h5M899 480.5h2M892 486.5h18M870 488.5h11M859 491.5h1M857 532.5h15M846 538.5h14M891 540.5h14M879 542.5h2M884 552.5h9M906 552.5h2M849 554.5h4M855 556.5h2M853 573.5h2"/><path stroke="#00dfff" d="M341 152.5h2M341 153.5h2M341 154.5h2M341 156.5h2M341 157.5h2M341 161.5h2M341 167.5h2M341 170.5h2M341 171.5h2M341 172.5h2M341 179.5h2M341 184.5h2M341 190.5h2M341 194.5h2M341 199.5h2M341 202.5h2M341 204.5h2M341 205.5h2M341 207.5h2M341 208.5h2M341 218.5h2M341 222.5h2M341 224.5h2M341 225.5h2M341 226.5h2M341 227.5h2M341 230.5h2M341 234.5h2M341 235.5h2M341 236.5h2M341 238.5h2M341 241.5h2M341 244.5h2M341 248.5h2M341 249.5h2M341 251.5h2M341 263.5h2M341 264.5h2M341 266.5h2M341 267.5h2M341 275.5h2M341 279.5h2M341 282.5h2M428 160.5h5M423 164.5h8M428 176.5h6M428 187.5h6M427 188.5h4M430 189.5h4M433 194.5h1M433 197.5h1M423 202.5h9M422 204.5h5M433 204.5h1M425 206.5h2M423 221.5h2M430 228.5h2M422 231.5h12M422 234.5h3M428 250.5h6M428 255.5h1M424 268.5h6M433 273.5h1M430 275.5h4M424 276.5h2M424 283.5h7M432 287.5h2M422 294.5h2M425 294.5h9M422 295.5h9M431 390.5h2M431 393.5h1M422 407.5h3M424 409.5h4M430 410.5h3M430 416.5h4M421 417.5h8M426 419.5h3M421 420.5h9M421 426.5h2M421 431.5h6M426 431.5h3M422 433.5h4M429 434.5h5M421 436.5h13M423 436.5h7M423 445.5h7M422 449.5h4M431 450.5h3M433 452.5h1M428 453.5h1M430 453.5h4M422 454.5h4M421 458.5h8M430 458.5h2M422 460.5h8M423 461.5h5M430 462.5h3M433 471.5h1M426 475.5h2M431 482.5h3M422 483.5h6M423 487.5h6M422 488.5h10M423 491.5h2M427 496.5h7M426 498.5h2M422 500.5h9M421 512.5h4M430 516.5h4M430 522.5h4M422 524.5h3M430 525.5h4M422 530.5h5M428 533.5h5M428 536.5h1M433 536.5h1M425 537.5h9M421 544.5h13M423 549.5h5M421 555.5h1M426 555.5h7M421 562.5h4M428 565.5h6M423 567.5h11M431 568.5h1M421 583.5h7M433 583.5h1M426 586.5h3M421 592.5h7M423 593.5h11M433 596.5h1M422 599.5h1M427 599.5h7M421 601.5h4M423 602.5h11M422 604.5h9M423 607.5h7M423 610.5h2M427 610.5h2M422 615.5h4M423 616.5h1M432 618.5h2M422 622.5h3M422 626.5h1M427 636.5h7M429 641.5h2M421 647.5h3M425 652.5h3M427 652.5h1M421 653.5h3M423 657.5h6M423 660.5h5M424 665.5h6M431 665.5h3M539 140.5h3M538 144.5h4M539 146.5h3M530 150.5h8M524 151.5h7M532 151.5h10M533 152.5h3M527 157.5h3M539 332.5h4M534 352.5h5M542 361.5h1M538 503.5h5M529 507.5h13M540 521.5h1M535 522.5h4M536 526.5h3M524 531.5h8M531 537.5h9M538 539.5h2M539 546.5h4M316 370.5h6M321 384.5h1M317 386.5h5M320 396.5h2M313 400.5h2M320 405.5h2M316 409.5h6M320 410.5h2M317 411.5h2M318 416.5h2M319 430.5h3M320 440.5h2M320 467.5h2M319 488.5h1M315 501.5h4M321 558.5h1M311 572.5h9M319 575.5h3M312 579.5h1M312 592.5h3M315 599.5h5M905 175.5h6M904 177.5h7M878 181.5h10M883 185.5h18M857 187.5h3M872 187.5h5M894 207.5h1M904 213.5h7M896 230.5h13M877 231.5h5M854 294.5h6M861 297.5h3M906 297.5h4M859 300.5h6M871 302.5h3M908 325.5h3M866 404.5h6M908 484.5h4M868 486.5h1M881 486.5h4M895 487.5h10M906 487.5h5M900 491.5h10M892 545.5h20M855 554.5h21M883 554.5h4M864 555.5h10M884 555.5h9M847 556.5h5M894 562.5h1M883 565.5h29M911 566.5h1"/><path stroke="#00ffef" d="M341 151.5h2M341 159.5h2M341 160.5h2M341 162.5h2M341 165.5h2M341 166.5h2M341 175.5h2M341 177.5h2M341 178.5h2M341 181.5h2M341 182.5h2M341 187.5h2M341 197.5h2M341 198.5h2M341 203.5h2M341 232.5h2M428 146.5h4M423 158.5h8M423 160.5h3M429 178.5h1M422 181.5h10M425 191.5h4M421 193.5h2M431 193.5h1M430 197.5h2M432 199.5h2M432 207.5h2M428 213.5h1M422 227.5h8M430 233.5h3M432 237.5h2M431 255.5h2M431 263.5h3M422 265.5h12M429 266.5h4M431 267.5h2M423 280.5h2M433 291.5h1M421 393.5h2M421 399.5h12M422 406.5h4M427 406.5h7M422 408.5h1M428 412.5h4M422 415.5h7M430 419.5h4M425 423.5h9M433 424.5h1M422 431.5h2M423 432.5h11M426 437.5h8M429 441.5h2M433 441.5h1M422 443.5h10M432 455.5h2M433 458.5h1M428 462.5h3M432 462.5h2M421 463.5h8M431 463.5h2M426 467.5h7M430 470.5h4M431 474.5h3M431 475.5h3M423 476.5h11M433 477.5h1M431 485.5h3M430 487.5h4M432 488.5h1M423 489.5h7M431 492.5h1M423 499.5h9M426 503.5h8M427 513.5h4M432 515.5h2M428 519.5h6M421 520.5h6M427 523.5h2M425 529.5h4M421 537.5h1M429 538.5h2M430 542.5h4M421 545.5h3M425 545.5h9M426 547.5h5M432 547.5h2M429 550.5h5M432 551.5h2M424 557.5h4M428 558.5h6M422 560.5h3M433 561.5h1M433 568.5h1M425 577.5h6M432 577.5h1M421 578.5h9M432 579.5h2M431 580.5h3M422 581.5h5M430 582.5h4M433 586.5h1M431 592.5h3M429 595.5h5M421 600.5h1M423 606.5h2M427 615.5h7M423 619.5h5M429 618.5h3M431 620.5h3M427 622.5h2M430 633.5h2M432 635.5h2M431 637.5h3M432 641.5h2M423 643.5h2M428 645.5h1M430 645.5h4M430 646.5h4M427 649.5h3M430 651.5h2M421 652.5h2M429 652.5h2M428 655.5h6M430 657.5h4M432 658.5h2M431 659.5h3M432 661.5h2M422 663.5h12M429 664.5h5M541 139.5h1M542 367.5h1M540 374.5h3M540 494.5h3M523 500.5h20M529 514.5h12M526 518.5h8M539 518.5h2M531 545.5h7M319 439.5h2M321 468.5h1M320 475.5h1M317 496.5h3M319 565.5h3M321 581.5h1M316 592.5h4M901 207.5h1M894 217.5h17M885 413.5h6M902 490.5h10M881 573.5h31"/><path stroke="#00ffbf" d="M428 143.5h6M430 192.5h4M424 195.5h10M433 206.5h1M423 220.5h2M427 234.5h1M429 234.5h3M431 243.5h2M433 254.5h1M433 260.5h1M424 267.5h6M433 272.5h1M429 276.5h5M425 408.5h3M430 409.5h3M430 415.5h4M433 420.5h1M429 422.5h4M421 430.5h6M429 433.5h5M421 435.5h13M423 444.5h7M427 445.5h4M433 445.5h1M422 447.5h10M425 455.5h4M433 458.5h1M430 461.5h3M425 469.5h8M426 470.5h3M425 472.5h9M428 482.5h1M433 489.5h1M421 493.5h13M427 495.5h7M426 497.5h2M427 501.5h1M430 517.5h3M428 520.5h6M423 521.5h11M432 524.5h2M423 529.5h1M433 529.5h1M431 532.5h3M425 540.5h6M425 548.5h7M432 548.5h2M433 578.5h1M429 589.5h3M429 590.5h5M428 591.5h1M427 601.5h7M426 606.5h2M430 607.5h4M423 612.5h4M422 614.5h11M425 616.5h9M432 617.5h2M428 621.5h3M422 625.5h6M423 628.5h10M422 636.5h12M429 642.5h5M425 645.5h2M423 646.5h2M425 651.5h3M423 664.5h1M541 379.5h2M539 497.5h4M314 564.5h8M320 576.5h2M910 172.5h1"/><path stroke="#00ff8f" d="M430 173.5h4M426 193.5h4M427 254.5h5M432 280.5h1M433 402.5h1M427 407.5h7M428 411.5h4M432 412.5h2M430 417.5h4M425 426.5h6M421 438.5h12M429 446.5h5M427 449.5h7M427 454.5h5M430 456.5h4M429 464.5h5M429 486.5h5M425 494.5h9M423 497.5h1M433 497.5h1M427 512.5h4M427 522.5h2M430 541.5h4M432 543.5h2M429 549.5h5M431 561.5h1M429 576.5h5M430 581.5h4M426 585.5h4M426 601.5h8M423 618.5h5M426 626.5h8M432 634.5h2M427 640.5h6M431 649.5h3M432 650.5h1M431 653.5h1M432 660.5h2M433 662.5h1M430 666.5h3"/><path stroke="#00ff5f" d="M433 457.5h1M427 474.5h3M433 511.5h1M430 523.5h4M429 553.5h5M429 588.5h3M429 589.5h5M427 600.5h7M430 606.5h4M429 612.5h1M433 612.5h1M422 635.5h12"/><path stroke="#00ff2f" d="M433 401.5h1M432 542.5h2M431 560.5h1M431 585.5h2M431 610.5h3M432 625.5h2"/></g></svg><!--/WF-->

<!-- logo -->
<div class="logo"><span class="o">Open</span>Web<b>RX</b></div>
<svg class="abs" style="left:0;top:0" width="280" height="60">
<path d="M17 47.8 H251.2 V30" fill="none" stroke="#fff" stroke-width="2"/>
<path d="M17 47.8 H108" fill="none" stroke="#cfcfcf" stroke-width="2"/>
<path d="M247.4 23.5 A8 8 0 0 0 247.4 37.7 M255 23.5 A8 8 0 0 1 255 37.7" fill="none" stroke="#fff" stroke-width="2.6" stroke-linecap="round"/>
<path d="M242.1 18.1 A15.5 15.5 0 0 0 242.1 43.1 M260.3 18.1 A15.5 15.5 0 0 1 260.3 43.1" fill="none" stroke="#fff" stroke-width="2.6" stroke-linecap="round"/>
</svg>

<!-- avatar -->
<svg class="abs" style="left:288px;top:3px" width="62" height="62" viewBox="288 3 62 62">
<rect x="294" y="9" width="50" height="50" rx="5" fill="#fff" stroke="#727272" stroke-width="4"/>
<path d="M300.6 22.6 C302.5 20 311 18.2 321 17.3 L334.5 16.3 C336.3 16.3 336 17.6 334.2 18.5 L322 22.8 C314 25 306.5 25.6 301.8 24 C300.6 23.6 300.2 23.2 300.6 22.6 Z" fill="#fff" stroke="#000" stroke-width="1.1"/>
<path d="M314.5 20.4 H317" stroke="#000" stroke-width="0.8"/>
<path d="M300.3 32.3 C299.3 36 300.5 41 304.5 45.5 L307.2 43 C304.5 41 303 38.5 302.8 35.5 C303.2 37 304 38.3 305.5 39.6 L308 38.5 C305 37 302.5 35 300.3 32.3 Z" fill="#fff" stroke="#000" stroke-width="1"/>
<path d="M317.5 40.5 L331.8 49.3 L330.5 47.2 L319 39.2 Z" fill="#fff" stroke="#000" stroke-width="1.1" stroke-linejoin="round"/>
<path d="M322.5 38.4 L335.6 41.6" stroke="#000" stroke-width="1.2" stroke-dasharray="0.9 0.5"/>
<path d="M304.6 47.6 L336.2 19" stroke="#000" stroke-width="8.8" stroke-linecap="round"/>
<path d="M304.6 47.6 L336.2 19" stroke="#fff" stroke-width="6.6" stroke-linecap="round"/>
<path d="M304.6 47.6 L336.2 19" stroke="#1e9bd4" stroke-width="5.2" stroke-linecap="round"/>
<circle cx="334.5" cy="20.3" r="0.6" fill="#000"/><circle cx="306.4" cy="46" r="0.6" fill="#000"/>
</svg>

<div class="ttl">OK1UNL</div>
<div class="sub">Pardubice, Czech rep. | Loc: JO70vb, ASL: 235 m, [<u>maps</u>]</div>
<div class="abs" style="left:470px;top:54px;width:43px;height:13px;background:#4c4c4c;border-radius:6px 6px 0 0"></div>
<svg class="abs" style="left:470px;top:54px" width="43" height="13"><path d="M13.7 4.4 H29.8 L21.75 9.6 Z" fill="#8a8a8a"/></svg>

<svg class="abs" style="left:1015px;top:0" width="351" height="62" viewBox="1015 0 351 62">
<g stroke="#fff" stroke-width="1.3">
<rect x="1028.3" y="9.6" width="28" height="5" rx="2.5" fill="#8a8a8a"/><rect x="1028.3" y="9.6" width="9" height="5" rx="2.5" fill="#fff"/>
<rect x="1032.5" y="17.8" width="28.5" height="5.5" rx="2.7" fill="#8a8a8a"/><rect x="1032.5" y="17.8" width="22" height="5.5" rx="2.7" fill="#fff"/>
<rect x="1028.3" y="26.5" width="28" height="5.5" rx="2.7" fill="#8a8a8a"/><rect x="1028.3" y="26.5" width="18" height="5.5" rx="2.7" fill="#fff"/>
</g>
<path d="M1088.5 5.8 H1107.5 Q1109.4 5.8 1109.4 7.7 V30.2 Q1109.4 32.1 1107.5 32.1 H1085.5 Q1083.6 32.1 1083.6 30.2 V10.5 Z" fill="#7e7e7e" stroke="#fff" stroke-width="1.5"/>
<path d="M1083.6 10.5 L1088.5 5.8 V10.5 Z" fill="#fff"/>
<g stroke="#fff" stroke-width="1.6"><path d="M1086.5 11 H1106.7 M1086.5 14.9 H1106.7 M1086.5 18.9 H1106.7 M1086.5 22.8 H1106.7 M1086.5 26.9 H1106.7"/></g>
<path d="M1141.6 5 L1166.5 13.5" stroke="#fff" stroke-width="1.2"/>
<rect x="1139.3" y="14.5" width="32.2" height="17.5" rx="2.5" fill="#7e7e7e" stroke="#fff" stroke-width="1.3"/>
<rect x="1141.6" y="16.9" width="13.6" height="3.5" rx="1" fill="#7e7e7e" stroke="#fff" stroke-width="1"/>
<g fill="#fff"><circle cx="1143.5" cy="23" r="1.3"/><circle cx="1148.3" cy="23" r="1.3"/><circle cx="1153" cy="23" r="1.3"/><circle cx="1143.5" cy="27" r="1.3"/><circle cx="1148.3" cy="27" r="1.3"/><circle cx="1153" cy="27" r="1.3"/></g>
<circle cx="1162.8" cy="23.2" r="6.1" fill="#9a9a9a" stroke="#fff" stroke-width="1.2"/>
<path d="M1198.8 9 L1207 5 L1216.5 8.5 L1227.5 4.5 V29 L1219.5 33.3 L1208 29.5 L1198.8 33.3 Z" fill="#7e7e7e" stroke="#fff" stroke-width="1.3" stroke-linejoin="round"/>
<path d="M1207 5 V29.5 M1219.5 20 V33.3 M1198.8 27 L1208 18 L1216.5 23.5 L1227.5 17.5" fill="none" stroke="#fff" stroke-width="1.2"/>
<path d="M1216.5 21.5 L1212.2 14 A5 5 0 1 1 1220.8 14 Z" fill="#7e7e7e" stroke="#fff" stroke-width="1.3"/>
<circle cx="1216.5" cy="11" r="2.2" fill="none" stroke="#fff" stroke-width="1.2"/>
<path d="M1252.5 43 V37 L1254.5 35 V24 H1265 V35 L1267 37 V43 Z" fill="#6e6e6e"/>
<rect x="1256.2" y="28.5" width="6" height="14" rx="0.8" fill="#1aa6d6"/>
<rect x="1260.3" y="15" width="2" height="14" fill="#1aa6d6"/>
<path d="M1275.5 22 Q1290.5 10 1305.5 22 M1278.8 25 Q1290.5 15.5 1302.2 25 M1282 28.2 Q1290.5 21 1299 28.2" fill="none" stroke="#1faee6" stroke-width="1.7"/>
<path d="M1271.4 29.7 V43.4 M1278.2 29.7 V43.4 M1271.4 36.5 H1278.2 M1281.8 43.4 L1290.2 30 L1298.4 43.4 M1310 30.9 H1301.6 L1301 36.4 Q1302.8 35.2 1305 35.2 A4.1 4.1 0 1 1 1300.6 41.6 M1313.4 29.7 V43.4 M1323.6 29.7 L1314.2 37 L1323.8 43.4 M1327.4 43.4 V30.9 H1336.6 M1327.4 36.6 H1335.4 M1340.8 29.7 V38.3 A4.9 4.9 0 0 0 1350.6 38.3 V29.7" fill="none" stroke="#6e6e6e" stroke-width="2.8"/>
<circle cx="1290.5" cy="39" r="1.3" fill="none" stroke="#1faee6" stroke-width="1"/>
</svg>
<div class="nav" style="left:1023px;transform:scaleX(1.15)">Status</div>
<div class="nav" style="left:1083px;transform:scaleX(1.12)">Log</div>
<div class="nav" style="left:1125px;transform:scaleX(1.08)">Receiver</div>
<div class="nav" style="left:1198px;transform:scaleX(1.17)">Map</div>

<svg class="abs" style="left:330px;top:85px" width="120" height="30" viewBox="330 85 120 30">
<path d="M351.5 98.5 H428.5 L433 109 H350 Z" fill="rgba(200,200,40,0.55)"/>
<path d="M343.5 110 H348.2 L353.8 97 H427.6 L432.6 110 H436.8 M435.7 96 V110" fill="none" stroke="#ffff00" stroke-width="3" stroke-linejoin="miter"/>
</svg>
<div id="ticks"><div class="tick" style="left:6.9px"></div><div class="tick" style="left:33.6px"></div><div class="tick maj" style="left:59.9px"></div><div class="lbl" style="left:61.9px">7.110 MHz</div><div class="tick" style="left:87.2px"></div><div class="tick" style="left:113.9px"></div><div class="tick" style="left:140.7px"></div><div class="tick" style="left:167.5px"></div><div class="tick maj" style="left:193.7px"></div><div class="lbl" style="left:195.7px">7.115 MHz</div><div class="tick" style="left:221.0px"></div><div class="tick" style="left:247.8px"></div><div class="tick" style="left:274.5px"></div><div class="tick" style="left:301.3px"></div><div class="tick maj" style="left:327.5px"></div><div class="lbl" style="left:329.5px">7.120 MHz</div><div class="tick" style="left:354.8px"></div><div class="tick" style="left:381.6px"></div><div class="tick" style="left:408.3px"></div><div class="tick" style="left:435.1px"></div><div class="tick maj" style="left:461.4px"></div><div class="lbl" style="left:463.4px">7.125 MHz</div><div class="tick" style="left:488.6px"></div><div class="tick" style="left:515.4px"></div><div class="tick" style="left:542.2px"></div><div class="tick" style="left:568.9px"></div><div class="tick maj" style="left:595.2px"></div><div class="lbl" style="left:597.2px">7.130 MHz</div><div class="tick" style="left:622.5px"></div><div class="tick" style="left:649.2px"></div><div class="tick" style="left:676.0px"></div><div class="tick" style="left:702.7px"></div><div class="tick maj" style="left:729.0px"></div><div class="lbl" style="left:731.0px">7.135 MHz</div><div class="tick" style="left:756.3px"></div><div class="tick" style="left:783.0px"></div><div class="tick" style="left:809.8px"></div><div class="tick" style="left:836.6px"></div><div class="tick maj" style="left:862.8px"></div><div class="lbl" style="left:864.8px">7.140 MHz</div><div class="tick" style="left:890.1px"></div><div class="tick" style="left:916.9px"></div><div class="tick" style="left:943.6px"></div><div class="tick" style="left:970.4px"></div><div class="tick maj" style="left:996.7px"></div><div class="lbl" style="left:998.7px">7.145 MHz</div><div class="tick" style="left:1023.9px"></div><div class="tick" style="left:1050.7px"></div><div class="tick" style="left:1077.4px"></div><div class="tick" style="left:1104.2px"></div><div class="tick maj" style="left:1130.5px"></div><div class="lbl" style="left:1132.5px">7.150 MHz</div><div class="tick" style="left:1157.7px"></div><div class="tick" style="left:1184.5px"></div><div class="tick" style="left:1211.3px"></div><div class="tick" style="left:1238.0px"></div><div class="tick maj" style="left:1264.3px"></div><div class="lbl" style="left:1266.3px">7.155 MHz</div><div class="tick" style="left:1291.6px"></div><div class="tick" style="left:1318.3px"></div><div class="tick" style="left:1345.1px"></div></div>

<div id="panel"></div>
<div class="abs" style="left:1091px;top:362px;font-family:'Liberation Mono',monospace;font-size:21px;letter-spacing:0.3px;color:#fff;white-space:nowrap;-webkit-text-stroke:0.35px #fff">7,1240 MHz</div>
<div class="abs" style="left:1091px;top:386.5px;font-family:'Liberation Mono',monospace;font-size:13px;letter-spacing:0.1px;color:#939393;white-space:nowrap;-webkit-text-stroke:0.2px #939393">7,1254 MHz</div>
<div class="abs" style="left:1315px;top:361px;width:35px;height:35px;background:#474747;border-radius:5px"></div>
<svg class="abs" style="left:1315px;top:361px" width="35" height="35"><path d="M8 5.5 H27 V30 L17.5 23.5 L8 30 Z" fill="none" stroke="#fff" stroke-width="2.6" stroke-linejoin="miter"/></svg>
<div class="btn" style="left:1091px;top:411px;width:259px;height:27px"></div>
<div class="abs" style="left:1095px;top:416.5px;font-size:13px;color:#fff;white-space:nowrap;transform-origin:0 0;transform:scaleX(1.16)">Airspy HF+ 40m</div>
<div class="abs" style="left:1337px;top:418px;font-size:9px;color:#fff">&#9660;</div>
<div class="btn" style="left:1091px;top:443px;width:48px;height:26px"><span>FM</span></div>
<div class="btn" style="left:1144px;top:443px;width:48px;height:26px"><span>AM</span></div>
<div class="btn" style="left:1197px;top:443px;width:47px;height:26px;color:#ffff50"><span>LSB</span></div>
<div class="btn" style="left:1249px;top:443px;width:48px;height:26px"><span>USB</span></div>
<div class="btn" style="left:1302px;top:443px;width:48px;height:26px"><span>CW</span></div>
<div class="btn" style="left:1091px;top:475px;width:61px;height:27px"><span>DMR</span></div>
<div class="btn" style="left:1157px;top:475px;width:61px;height:27px"><span>DStar</span></div>
<div class="btn" style="left:1223px;top:475px;width:61px;height:27px"><span>NXDN</span></div>
<div class="btn" style="left:1289px;top:475px;width:61px;height:27px"><span>YSF</span></div>
<div class="btn" style="left:1091px;top:508px;width:56px;height:27px"><span>DIG</span></div>
<div class="btn" style="left:1153px;top:508px;width:196px;height:27px"></div>
<div class="abs" style="left:1337px;top:515px;font-size:9px;color:#fff">&#9660;</div>
<div class="btn" style="left:1091px;top:540px;width:22px;height:25.5px"></div>
<div class="btn" style="left:1218px;top:543px;width:22px;height:22.5px"></div>
<div class="btn" style="left:1091px;top:571px;width:22px;height:23px"></div>
<div class="btn" style="left:1218px;top:572px;width:22px;height:22px"></div>
<svg class="abs" style="left:1086px;top:536px" width="160" height="64" viewBox="1086 536 160 64">
<path d="M1094.8 549.5 H1097.3 L1101.3 546 V559 L1097.3 555.5 H1094.8 Z" fill="#fff"/>
<path d="M1103.2 548 Q1105.3 552.5 1103.2 557 M1105.5 546.8 Q1108.2 552.5 1105.5 558.2 M1107.6 546 Q1110.8 552.5 1107.6 559" fill="none" stroke="#fff" stroke-width="0.9"/>
<path d="M1222 548.3 H1227.8 L1226 550.5 V557.5 L1227.8 560 H1222 L1223.8 557.5 V550.5 Z" fill="#fff"/>
<path d="M1228.3 560 V551 L1230 549.5 L1231 553 L1232.2 548.5 L1233.6 550 L1234.4 551 L1236.2 553 V560 Z" fill="#c8c8c8"/>
<text x="1094.6" y="588.4" font-family="Liberation Sans" font-weight="bold" font-size="17" fill="#fff" textLength="14.6" lengthAdjust="spacingAndGlyphs">SQ</text>
<path d="M1225.4 577.6 L1222.4 581 H1224.4 V586 H1222.4 L1225.4 589.3 L1228.4 586 H1226.4 V581 H1228.4 Z" fill="#fff"/>
<path d="M1228.9 589.3 V586 L1230.5 584.6 L1231.8 586 L1233 584.6 L1234.6 586.5 L1236.2 587 V589.3 Z" fill="#c8c8c8"/>
</svg>
<div class="track" style="left:1119px;top:551px;width:95px"></div>
<div class="thumb" style="left:1179px;top:545px"></div>
<div class="track" style="left:1246px;top:551px;width:95px"></div>
<div class="thumb" style="left:1281px;top:545px"></div>
<div class="track" style="left:1119px;top:580px;width:95px"></div>
<div class="abs" style="left:1119px;top:580px;width:59px;height:4px;background:#22dd22"></div>
<div class="thumb" style="left:1133px;top:575px"></div>
<div class="track" style="left:1246px;top:580px;width:95px"></div>
<div class="thumb" style="left:1299px;top:574px"></div>
<div class="btn" style="left:1091px;top:600px;width:36px;height:38.5px"></div>
<div class="btn" style="left:1132px;top:600px;width:36px;height:38.5px"></div>
<div class="btn" style="left:1173px;top:600px;width:32px;height:38.5px"></div>
<div class="btn" style="left:1211px;top:600px;width:32.5px;height:38.5px"></div>
<svg class="abs" style="left:1086px;top:596px" width="164" height="48" viewBox="1086 596 164 48">
<g fill="none" stroke="#fff">
<circle cx="1105.8" cy="615.8" r="9.2" stroke-width="2.6"/>
<path d="M1112.6 622.6 L1120 630" stroke-width="4.2" stroke-linecap="round"/>
<path d="M1100 615.8 H1111.6 M1105.8 610 V621.6" stroke-width="2.8"/>
<circle cx="1146.6" cy="615.8" r="9.2" stroke-width="2.6"/>
<path d="M1153.4 622.6 L1160.8 630" stroke-width="4.2" stroke-linecap="round"/>
<path d="M1140.6 615.8 H1152.6" stroke-width="2.8"/>
<circle cx="1190.4" cy="622.4" r="5.3" stroke-width="1.8"/>
<path d="M1194.4 626.4 L1198.8 630.8" stroke-width="2.6" stroke-linecap="round"/>
<circle cx="1228.3" cy="622.4" r="5.3" stroke-width="1.8"/>
<path d="M1232.3 626.4 L1236.7 630.8" stroke-width="2.6" stroke-linecap="round"/>
</g>
<path d="M1177.2 605.6 L1182.6 609.8 H1195.8 L1201.2 605.6 V617 L1195.8 612.8 H1182.6 L1177.2 617 Z" fill="#fff"/>
<path d="M1215 611.3 L1220.5 606.2 V609.8 H1233.5 V606.2 L1239 611.3 L1233.5 616.4 V612.8 H1220.5 V616.4 Z" fill="#fff"/>
</svg>
<div class="abs" style="left:1281px;top:626px;font-family:'Liberation Mono',monospace;font-size:13px;color:#aaa;white-space:nowrap">-56.8 dB</div>
<div class="abs" style="left:1091px;top:644px;width:255px;height:7px;background:#3a3a3a;border-radius:4px"></div>
<div class="abs" style="left:1091px;top:644px;width:79px;height:7px;background:linear-gradient(#44ee44,#11cc11 60%,#00aa00);border-radius:4px"></div>

<div class="sbar" style="left:6px;top:621px;width:200px"><i style="width:180px"></i><span>Audio buffer [0.9 s]</span></div>
<div class="sbar" style="left:210px;top:621px;width:199px"><i style="width:160px"></i><span>Audio output [44.2 ksps]</span></div>
<div class="sbar" style="left:415px;top:621px;width:200px"><i style="width:16px"></i><span>Audio stream [44 kbps]</span></div>
<div class="sbar" style="left:6px;top:644px;width:200px"><i style="width:18px"></i><span>Network usage [194.8 kbps]</span></div>
<div class="sbar" style="left:210px;top:644px;width:199px"><i style="width:8px"></i><span>Server CPU [4%]</span></div>
<div class="sbar" style="left:415px;top:644px;width:200px"><i style="width:39px"></i><span>Clients [1]</span></div>
</body></html>
